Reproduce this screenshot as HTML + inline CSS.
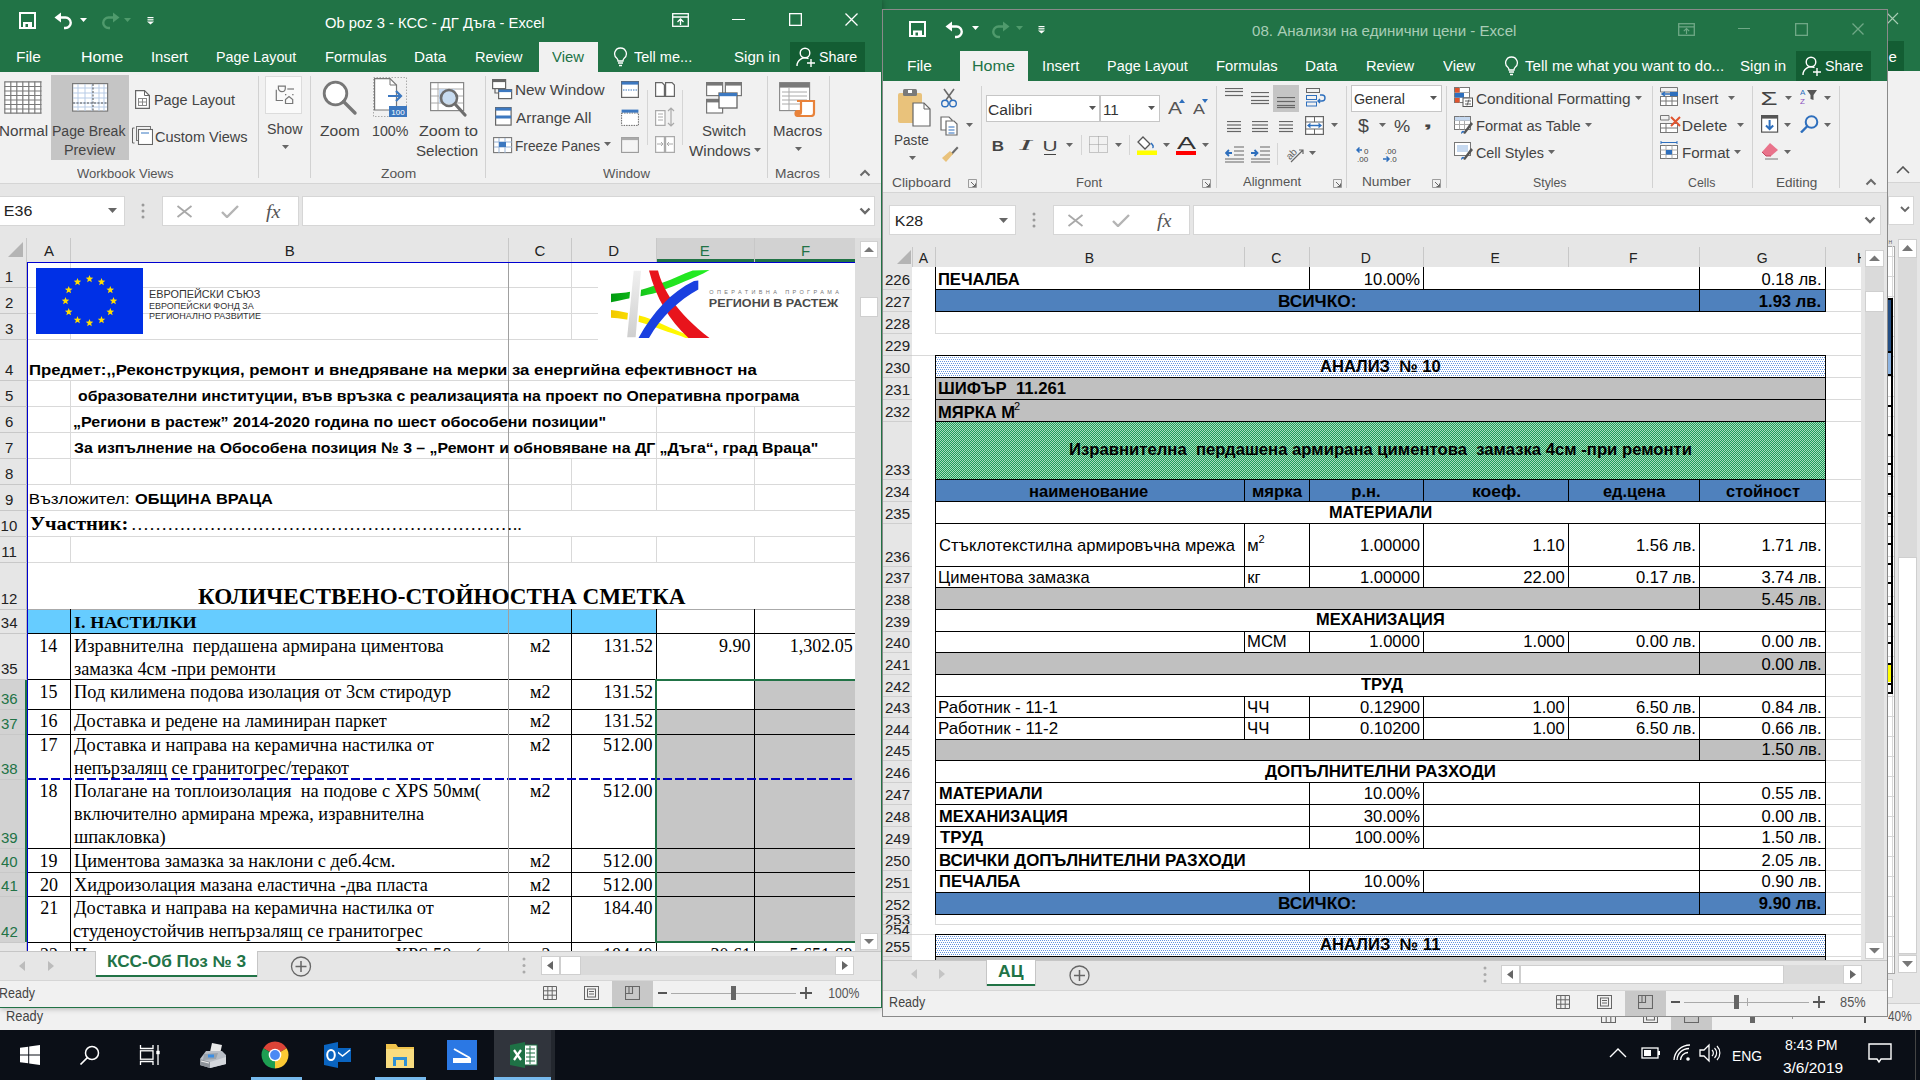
<!DOCTYPE html><html><head><meta charset="utf-8"><title>Excel</title><style>html,body{margin:0;padding:0;width:1920px;height:1080px;overflow:hidden;background:#f1f1f1;}.a{position:absolute;}</style></head><body><div style="position:absolute;left:0;top:0;width:1920px;height:1080px;overflow:hidden;"><div style="position:absolute;left:0px;top:0px;width:1920px;height:41px;background:#217346"></div><div style="position:absolute;left:0px;top:41px;width:1920px;height:30px;background:#217346"></div><div style="position:absolute;left:1829px;top:41px;width:75px;height:30px;background:#135d33"></div><div style="position:absolute;left:1888.40px;top:49.30px;white-space:pre;font-family:'Liberation Sans', sans-serif;font-size:15px;line-height:15px;font-weight:normal;color:#fff;">e</div><svg style="position:absolute;left:1886px;top:12px;" width="13" height="13" viewBox="0 0 13 13"><path d="M1 1L12 12M12 1L1 12" stroke="#a8cdb4" stroke-width="1.1"/></svg><div style="position:absolute;left:0px;top:71px;width:1920px;height:112px;background:#f1f1f1"></div><div style="position:absolute;left:1897.00px;top:165.84px;white-space:pre;font-family:'Liberation Sans', sans-serif;font-size:12px;line-height:12px;font-weight:normal;color:#000;"></div><svg style="position:absolute;left:1896px;top:166px;" width="14" height="8" viewBox="0 0 14 8"><path d="M1 7L7 1L13 7" stroke="#555" stroke-width="1.6" fill="none"/></svg><div style="position:absolute;left:0px;top:183px;width:1920px;height:847px;background:#e6e6e6"></div><div style="position:absolute;left:0px;top:182px;width:1920px;height:1px;background:#d4d4d4"></div><div style="position:absolute;left:1888px;top:196px;width:26px;height:29px;background:#fff;border:1px solid #d6d6d6;box-sizing:border-box"></div><svg style="position:absolute;left:1900px;top:206px;" width="10" height="7" viewBox="0 0 10 7"><path d="M1 1L5 5L9 1" stroke="#666" stroke-width="1.8" fill="none"/></svg><div style="position:absolute;left:1888px;top:246px;width:6px;height:728px;background:#fff"></div><div style="position:absolute;left:1888px;top:246px;width:6px;height:1px;background:#a8a8a8"></div><div style="position:absolute;left:1894px;top:246px;width:1px;height:728px;background:#a8a8a8"></div><div style="position:absolute;left:1892px;top:246px;width:1px;height:728px;background:#d8d8d8"></div><div style="position:absolute;left:1888px;top:256px;width:6px;height:1px;background:#d8d8d8"></div><div style="position:absolute;left:1888px;top:276px;width:6px;height:1px;background:#d8d8d8"></div><div style="position:absolute;left:1888px;top:296px;width:6px;height:1px;background:#d8d8d8"></div><div style="position:absolute;left:1888px;top:316px;width:6px;height:1px;background:#d8d8d8"></div><div style="position:absolute;left:1888px;top:336px;width:6px;height:1px;background:#d8d8d8"></div><div style="position:absolute;left:1888px;top:356px;width:6px;height:1px;background:#d8d8d8"></div><div style="position:absolute;left:1888px;top:376px;width:6px;height:1px;background:#d8d8d8"></div><div style="position:absolute;left:1888px;top:396px;width:6px;height:1px;background:#d8d8d8"></div><div style="position:absolute;left:1888px;top:416px;width:6px;height:1px;background:#d8d8d8"></div><div style="position:absolute;left:1888px;top:436px;width:6px;height:1px;background:#d8d8d8"></div><div style="position:absolute;left:1888px;top:456px;width:6px;height:1px;background:#d8d8d8"></div><div style="position:absolute;left:1888px;top:476px;width:6px;height:1px;background:#d8d8d8"></div><div style="position:absolute;left:1888px;top:496px;width:6px;height:1px;background:#d8d8d8"></div><div style="position:absolute;left:1888px;top:516px;width:6px;height:1px;background:#d8d8d8"></div><div style="position:absolute;left:1888px;top:536px;width:6px;height:1px;background:#d8d8d8"></div><div style="position:absolute;left:1888px;top:556px;width:6px;height:1px;background:#d8d8d8"></div><div style="position:absolute;left:1888px;top:576px;width:6px;height:1px;background:#d8d8d8"></div><div style="position:absolute;left:1888px;top:596px;width:6px;height:1px;background:#d8d8d8"></div><div style="position:absolute;left:1888px;top:616px;width:6px;height:1px;background:#d8d8d8"></div><div style="position:absolute;left:1888px;top:636px;width:6px;height:1px;background:#d8d8d8"></div><div style="position:absolute;left:1888px;top:656px;width:6px;height:1px;background:#d8d8d8"></div><div style="position:absolute;left:1888px;top:676px;width:6px;height:1px;background:#d8d8d8"></div><div style="position:absolute;left:1888px;top:696px;width:6px;height:1px;background:#d8d8d8"></div><div style="position:absolute;left:1888px;top:716px;width:6px;height:1px;background:#d8d8d8"></div><div style="position:absolute;left:1888px;top:736px;width:6px;height:1px;background:#d8d8d8"></div><div style="position:absolute;left:1888px;top:756px;width:6px;height:1px;background:#d8d8d8"></div><div style="position:absolute;left:1888px;top:776px;width:6px;height:1px;background:#d8d8d8"></div><div style="position:absolute;left:1888px;top:796px;width:6px;height:1px;background:#d8d8d8"></div><div style="position:absolute;left:1888px;top:816px;width:6px;height:1px;background:#d8d8d8"></div><div style="position:absolute;left:1888px;top:836px;width:6px;height:1px;background:#d8d8d8"></div><div style="position:absolute;left:1888px;top:856px;width:6px;height:1px;background:#d8d8d8"></div><div style="position:absolute;left:1888px;top:876px;width:6px;height:1px;background:#d8d8d8"></div><div style="position:absolute;left:1888px;top:896px;width:6px;height:1px;background:#d8d8d8"></div><div style="position:absolute;left:1888px;top:916px;width:6px;height:1px;background:#d8d8d8"></div><div style="position:absolute;left:1888px;top:936px;width:6px;height:1px;background:#d8d8d8"></div><div style="position:absolute;left:1888px;top:956px;width:6px;height:1px;background:#d8d8d8"></div><div style="position:absolute;left:1888px;top:973px;width:7px;height:1px;background:#a8a8a8"></div><div style="position:absolute;left:1888px;top:298px;width:3px;height:53px;background:#234e84"></div><div style="position:absolute;left:1888px;top:353px;width:3px;height:21px;background:#8db4e2"></div><div style="position:absolute;left:1888px;top:664px;width:3px;height:18px;background:#ffff00"></div><div style="position:absolute;left:1891px;top:298px;width:2px;height:394px;background:#000"></div><div style="position:absolute;left:1888px;top:298px;width:5px;height:2px;background:#000"></div><div style="position:absolute;left:1888px;top:351px;width:5px;height:2px;background:#000"></div><div style="position:absolute;left:1888px;top:374px;width:5px;height:2px;background:#000"></div><div style="position:absolute;left:1888px;top:405px;width:5px;height:2px;background:#000"></div><div style="position:absolute;left:1888px;top:434px;width:5px;height:2px;background:#000"></div><div style="position:absolute;left:1888px;top:463px;width:5px;height:2px;background:#000"></div><div style="position:absolute;left:1888px;top:473px;width:5px;height:2px;background:#000"></div><div style="position:absolute;left:1888px;top:493px;width:5px;height:2px;background:#000"></div><div style="position:absolute;left:1888px;top:512px;width:5px;height:2px;background:#000"></div><div style="position:absolute;left:1888px;top:523px;width:5px;height:2px;background:#000"></div><div style="position:absolute;left:1888px;top:543px;width:5px;height:2px;background:#000"></div><div style="position:absolute;left:1888px;top:563px;width:5px;height:2px;background:#000"></div><div style="position:absolute;left:1888px;top:582px;width:5px;height:2px;background:#000"></div><div style="position:absolute;left:1888px;top:603px;width:5px;height:2px;background:#000"></div><div style="position:absolute;left:1888px;top:623px;width:5px;height:2px;background:#000"></div><div style="position:absolute;left:1888px;top:642px;width:5px;height:2px;background:#000"></div><div style="position:absolute;left:1888px;top:663px;width:5px;height:2px;background:#000"></div><div style="position:absolute;left:1888px;top:683px;width:5px;height:2px;background:#000"></div><div style="position:absolute;left:1888px;top:692px;width:5px;height:2px;background:#000"></div><div style="position:absolute;left:1888.60px;top:239.77px;white-space:pre;font-family:'Liberation Sans', sans-serif;font-size:5px;line-height:5px;font-weight:normal;color:#555;">H</div><div style="position:absolute;left:1898px;top:257px;width:19px;height:698px;background:#dadada"></div><div style="position:absolute;left:1898px;top:239px;width:19px;height:19px;background:#fff;border:1px solid #cfcfcf;box-sizing:border-box"></div><svg style="position:absolute;left:1902px;top:244px;" width="11" height="7" viewBox="0 0 11 7"><path d="M0 7L5.5 1L11 7Z" fill="#777"/></svg><div style="position:absolute;left:1898px;top:557px;width:19px;height:397px;background:#fff;border:1px solid #cfcfcf;box-sizing:border-box"></div><div style="position:absolute;left:1898px;top:955px;width:19px;height:18px;background:#fff;border:1px solid #cfcfcf;box-sizing:border-box"></div><svg style="position:absolute;left:1902px;top:961px;" width="11" height="7" viewBox="0 0 11 7"><path d="M0 0L5.5 6L11 0Z" fill="#777"/></svg><div style="position:absolute;left:1888px;top:979px;width:5px;height:19px;background:#fff;border:1px solid #d0d0d0;border-left:none;box-sizing:border-box"></div><div style="position:absolute;left:0px;top:1003px;width:1920px;height:27px;background:#f1f1f1"></div><div style="position:absolute;left:0px;top:1003px;width:1920px;height:1px;background:#d0d0d0"></div><div style="position:absolute;left:5.90px;top:1009.15px;white-space:pre;font-family:'Liberation Sans', sans-serif;font-size:14px;line-height:14px;font-weight:normal;color:#444;transform:scaleX(0.9137);transform-origin:1.10px 0;">Ready</div><div style="position:absolute;left:1887.70px;top:1008.75px;white-space:pre;font-family:'Liberation Sans', sans-serif;font-size:14px;line-height:14px;font-weight:normal;color:#555;transform:scaleX(0.8425);transform-origin:0.30px 0;">40%</div><div style="position:absolute;left:1671px;top:1017px;width:41px;height:13px;background:#c8c8c8"></div><svg style="position:absolute;left:1601px;top:1017px;" width="15" height="6" viewBox="0 0 15 6"><path d="M0.5 0V5.5H14.5V0M5.2 0V5.5M9.8 0V5.5" stroke="#666" stroke-width="1.1" fill="none"/></svg><svg style="position:absolute;left:1643px;top:1017px;" width="15" height="6" viewBox="0 0 15 6"><path d="M0.5 0V5.5H14.5V0M3.5 0V3H11.5V0" stroke="#666" stroke-width="1.1" fill="none"/></svg><svg style="position:absolute;left:1684px;top:1017px;" width="15" height="6" viewBox="0 0 15 6"><path d="M0.5 0V5.5H14.5V0" stroke="#666" stroke-width="1.1" fill="none"/></svg><div style="position:absolute;left:1750px;top:1017px;width:5px;height:6px;background:#666"></div><div style="position:absolute;left:1792px;top:1017px;width:1px;height:2px;background:#999"></div><div style="position:absolute;left:1864px;top:1017px;width:2px;height:6px;background:#555"></div><div style="position:absolute;left:0px;top:1030px;width:1920px;height:50px;background:#0b0f17"></div><svg style="position:absolute;left:20px;top:1045px;" width="20" height="20" viewBox="0 0 20 20"><path d="M0 2.8L8.2 1.7V9.5H0Z M9.2 1.5L20 0V9.5H9.2Z M0 10.5H8.2V18.3L0 17.2Z M9.2 10.5H20V20L9.2 18.5Z" fill="#fff"/></svg><svg style="position:absolute;left:79px;top:1044px;" width="22" height="22" viewBox="0 0 22 22"><circle cx="13" cy="9" r="6.5" stroke="#fff" stroke-width="1.5" fill="none"/><path d="M8.5 13.5L1.5 20.5" stroke="#fff" stroke-width="1.7"/></svg><svg style="position:absolute;left:139px;top:1044px;" width="22" height="22" viewBox="0 0 22 22"><path d="M1.5 1V4.5H14V1M1.5 21V17.5H14V21M19 1V21" stroke="#fff" stroke-width="1.3" fill="none"/><rect x="1.5" y="6.8" width="12.5" height="8.4" stroke="#fff" stroke-width="1.3" fill="none"/><rect x="17.3" y="6.8" width="3.4" height="3.4" fill="#fff"/></svg><svg style="position:absolute;left:198px;top:1042px;" width="30" height="27" viewBox="0 0 30 27"><path d="M14 1L24 3L22 12L12 10Z" fill="#e8e8e8"/><path d="M2 17L8 9H24L28 13V22L12 26L2 23Z" fill="#b9bec6"/><path d="M2 17L12 20V26L2 23Z" fill="#8e939a"/><path d="M12 20L28 15V22L12 26Z" fill="#d4d7dc"/><path d="M6 12L20 11L18 17L5 18Z" fill="#9aa3ad"/><rect x="10" y="12.5" width="6" height="3" fill="#3a8ee6"/><path d="M3 19L11 21" stroke="#eee" stroke-width="1.2"/></svg><svg style="position:absolute;left:261px;top:1041px;" width="28" height="28" viewBox="0 0 28 28"><path d="M14 14L2.31 7.25A13.5 13.5 0 0 1 25.69 7.25Z" fill="#db4437"/><path d="M14 14L25.69 7.25A13.5 13.5 0 0 1 14 27.5Z" fill="#fcc934"/><path d="M14 14L14 27.5A13.5 13.5 0 0 1 2.31 7.25Z" fill="#1e9e52"/><circle cx="14" cy="14" r="6.3" fill="#fff"/><circle cx="14" cy="14" r="4.9" fill="#4a8af4"/></svg><div style="position:absolute;left:251px;top:1077px;width:51px;height:3px;background:#76b9ed"></div><svg style="position:absolute;left:324px;top:1041px;" width="28" height="28" viewBox="0 0 28 28"><rect x="10" y="7" width="17" height="14" fill="#0a64c0"/><path d="M11 9L18.5 15L26 9" stroke="#fff" stroke-width="1.6" fill="none"/><path d="M0 4L14 1V27L0 24Z" fill="#0a64c0"/><ellipse cx="7" cy="14" rx="3.8" ry="5" stroke="#fff" stroke-width="2" fill="none"/></svg><svg style="position:absolute;left:386px;top:1042px;" width="28" height="26" viewBox="0 0 28 26"><path d="M0 2H10L12 5H28V26H0Z" fill="#f0c34c"/><rect x="0" y="7" width="28" height="19" fill="#f8dc80"/><rect x="7" y="15" width="14" height="3" fill="#2d8fd5"/><rect x="7" y="15" width="3" height="9" fill="#2d8fd5"/><rect x="18" y="15" width="3" height="9" fill="#2d8fd5"/></svg><div style="position:absolute;left:375px;top:1077px;width:51px;height:3px;background:#76b9ed"></div><svg style="position:absolute;left:447px;top:1040px;" width="30" height="30" viewBox="0 0 30 30"><rect x="0" y="0" width="30" height="30" fill="#2b78e4"/><path d="M7 9L23 18" stroke="#fff" stroke-width="2"/><rect x="6" y="18" width="18" height="5" fill="#fff"/></svg><div style="position:absolute;left:494px;top:1030px;width:57px;height:50px;background:#30343c"></div><div style="position:absolute;left:551px;top:1030px;width:4px;height:50px;background:#23272e"></div><svg style="position:absolute;left:510px;top:1042px;" width="28" height="26" viewBox="0 0 28 26"><rect x="12" y="3" width="15" height="20" fill="#fff" stroke="#1e7145" stroke-width="1"/><path d="M16 7H25M16 11H25M16 15H25M16 19H25M20 4V22" stroke="#1e7145" stroke-width="1"/><path d="M0 3L15 0V26L0 23Z" fill="#1e7145"/><path d="M4 8L11 18M11 8L4 18" stroke="#fff" stroke-width="2.2"/></svg><div style="position:absolute;left:494px;top:1077px;width:57px;height:3px;background:#76b9ed"></div><svg style="position:absolute;left:1608px;top:1047px;" width="20" height="12" viewBox="0 0 20 12"><path d="M2 10L10 2L18 10" stroke="#fff" stroke-width="1.4" fill="none"/></svg><svg style="position:absolute;left:1641px;top:1046px;" width="20" height="14" viewBox="0 0 20 14"><rect x="1" y="2" width="16" height="10" stroke="#fff" stroke-width="1.3" fill="none"/><rect x="3" y="4" width="7" height="6" fill="#fff"/><rect x="17" y="5" width="2" height="4" fill="#fff"/></svg><svg style="position:absolute;left:1672px;top:1043px;" width="22" height="20" viewBox="0 0 22 20"><path d="M2 17A16 16 0 0 1 18 2M5 17A12 12 0 0 1 17 5.5M8.5 17A8 8 0 0 1 16 9.5" stroke="#fff" stroke-width="1.3" fill="none"/><circle cx="16" cy="16" r="1.8" fill="#fff"/></svg><svg style="position:absolute;left:1699px;top:1043px;" width="22" height="20" viewBox="0 0 22 20"><path d="M1 7H5L10 2V18L5 13H1Z" stroke="#fff" stroke-width="1.3" fill="none"/><path d="M13 7A4 4 0 0 1 13 13M15.5 5A7 7 0 0 1 15.5 15M18 3A10 10 0 0 1 18 17" stroke="#fff" stroke-width="1.2" fill="none"/></svg><div style="position:absolute;left:1731.90px;top:1049.15px;white-space:pre;font-family:'Liberation Sans', sans-serif;font-size:14px;line-height:14px;font-weight:normal;color:#fff;transform:scaleX(0.9929);transform-origin:1.10px 0;">ENG</div><div style="position:absolute;left:1785.40px;top:1038.15px;white-space:pre;font-family:'Liberation Sans', sans-serif;font-size:14px;line-height:14px;font-weight:normal;color:#fff;transform:scaleX(1.0099);transform-origin:0.60px 0;">8:43 PM</div><div style="position:absolute;left:1782.50px;top:1061.15px;white-space:pre;font-family:'Liberation Sans', sans-serif;font-size:14px;line-height:14px;font-weight:normal;color:#fff;transform:scaleX(1.1049);transform-origin:0.50px 0;">3/6/2019</div><svg style="position:absolute;left:1868px;top:1043px;" width="24" height="22" viewBox="0 0 24 22"><path d="M1 1H23V16H13L11 19L9 16H1Z" stroke="#fff" stroke-width="1.4" fill="none"/></svg><div style="position:absolute;left:1915px;top:1030px;width:1px;height:50px;background:#444"></div><div style="position:absolute;left:0;top:0;width:882px;height:1008px;overflow:hidden;box-shadow:0 0 6px rgba(0,0,0,0.35);"><div style="position:absolute;left:0px;top:0px;width:881px;height:1008px;background:#e6e6e6"></div><div style="position:absolute;left:0px;top:0px;width:881px;height:72px;background:#217346"></div><svg style="position:absolute;left:19px;top:12px;" width="17" height="17" viewBox="0 0 17 17"><rect x="1" y="1" width="15" height="15" stroke="#fff" stroke-width="2" fill="none"/><rect x="4" y="10" width="9" height="6" fill="#fff"/><rect x="6.5" y="12" width="2.5" height="3" fill="#217346"/></svg><svg style="position:absolute;left:54px;top:12px;" width="22" height="18" viewBox="0 0 22 18"><path d="M6 5.5H11.5A5.25 5.25 0 0 1 11.5 16H10" stroke="#fff" stroke-width="2.4" fill="none"/><path d="M0.5 5.5L7 0.5V10.5Z" fill="#fff"/></svg><svg style="position:absolute;left:80px;top:18px;" width="8" height="5" viewBox="0 0 8 5"><path d="M0 0H7L3.5 4Z" fill="#fff"/></svg><svg style="position:absolute;left:98px;top:12px;" width="22" height="18" viewBox="0 0 22 18"><path d="M16 5.5H10.5A5.25 5.25 0 0 0 10.5 16H12" stroke="#4f9a6c" stroke-width="2.4" fill="none"/><path d="M21.5 5.5L15 0.5V10.5Z" fill="#4f9a6c"/></svg><svg style="position:absolute;left:124px;top:18px;" width="8" height="5" viewBox="0 0 8 5"><path d="M0 0H7L3.5 4Z" fill="#4f9a6c"/></svg><svg style="position:absolute;left:147px;top:17px;" width="8" height="8" viewBox="0 0 8 8"><rect x="0.5" y="0" width="6" height="1.2" fill="#fff"/><rect x="0.5" y="2.2" width="6" height="1.2" fill="#fff"/><path d="M0 4.5H7L3.5 7.5Z" fill="#fff"/></svg><div style="position:absolute;left:325.30px;top:15.30px;white-space:pre;font-family:'Liberation Sans', sans-serif;font-size:15px;line-height:15px;font-weight:normal;color:#fff;transform:scaleX(0.9838);transform-origin:0.70px 0;">Ob poz 3 - КСС - ДГ Дъга - Excel</div><svg style="position:absolute;left:672px;top:13px;" width="17" height="14" viewBox="0 0 17 14"><rect x="0.7" y="0.7" width="15.6" height="12.6" stroke="#fff" stroke-width="1.3" fill="none"/><path d="M0.7 4H16.3M8.5 12V6M5.5 9L8.5 6L11.5 9" stroke="#fff" stroke-width="1.3" fill="none"/></svg><div style="position:absolute;left:732px;top:19px;width:13px;height:1.3px;background:#fff"></div><svg style="position:absolute;left:789px;top:13px;" width="13" height="13" viewBox="0 0 13 13"><rect x="0.65" y="0.65" width="11.7" height="11.7" stroke="#fff" stroke-width="1.3" fill="none"/></svg><svg style="position:absolute;left:845px;top:13px;" width="13" height="13" viewBox="0 0 13 13"><path d="M0.5 0.5L12.5 12.5M12.5 0.5L0.5 12.5" stroke="#fff" stroke-width="1.3"/></svg><div style="position:absolute;left:15.80px;top:49.00px;white-space:pre;font-family:'Liberation Sans', sans-serif;font-size:15px;line-height:15px;font-weight:normal;color:#fff;transform:scaleX(1.0314);transform-origin:1.20px 0;">File</div><div style="position:absolute;left:80.80px;top:49.00px;white-space:pre;font-family:'Liberation Sans', sans-serif;font-size:15px;line-height:15px;font-weight:normal;color:#fff;transform:scaleX(1.0602);transform-origin:1.20px 0;">Home</div><div style="position:absolute;left:150.70px;top:49.00px;white-space:pre;font-family:'Liberation Sans', sans-serif;font-size:15px;line-height:15px;font-weight:normal;color:#fff;transform:scaleX(0.9834);transform-origin:1.30px 0;">Insert</div><div style="position:absolute;left:215.80px;top:49.00px;white-space:pre;font-family:'Liberation Sans', sans-serif;font-size:15px;line-height:15px;font-weight:normal;color:#fff;transform:scaleX(0.9518);transform-origin:1.20px 0;">Page Layout</div><div style="position:absolute;left:324.80px;top:49.00px;white-space:pre;font-family:'Liberation Sans', sans-serif;font-size:15px;line-height:15px;font-weight:normal;color:#fff;transform:scaleX(0.9868);transform-origin:1.20px 0;">Formulas</div><div style="position:absolute;left:413.80px;top:49.00px;white-space:pre;font-family:'Liberation Sans', sans-serif;font-size:15px;line-height:15px;font-weight:normal;color:#fff;transform:scaleX(1.0164);transform-origin:1.20px 0;">Data</div><div style="position:absolute;left:474.80px;top:49.00px;white-space:pre;font-family:'Liberation Sans', sans-serif;font-size:15px;line-height:15px;font-weight:normal;color:#fff;transform:scaleX(0.9667);transform-origin:1.20px 0;">Review</div><div style="position:absolute;left:539px;top:42px;width:59px;height:30px;background:#f1f1f1"></div><div style="position:absolute;left:552.00px;top:49.00px;white-space:pre;font-family:'Liberation Sans', sans-serif;font-size:15px;line-height:15px;font-weight:normal;color:#217346;transform:scaleX(0.9907);transform-origin:0.00px 0;">View</div><svg style="position:absolute;left:613px;top:47px;" width="15" height="20" viewBox="0 0 15 20"><path d="M7.5 1A5.8 5.8 0 0 0 3.8 11.3C4.6 12 5 13 5 14H10C10 13 10.4 12 11.2 11.3A5.8 5.8 0 0 0 7.5 1Z" stroke="#fff" stroke-width="1.3" fill="none"/><path d="M5 16H10M6 18.5H9" stroke="#fff" stroke-width="1.3"/></svg><div style="position:absolute;left:634.20px;top:49.00px;white-space:pre;font-family:'Liberation Sans', sans-serif;font-size:15px;line-height:15px;font-weight:normal;color:#fff;transform:scaleX(0.9691);transform-origin:0.30px 0;">Tell me...</div><div style="position:absolute;left:734.40px;top:49.00px;white-space:pre;font-family:'Liberation Sans', sans-serif;font-size:15px;line-height:15px;font-weight:normal;color:#fff;transform:scaleX(1.0045);transform-origin:0.60px 0;">Sign in</div><div style="position:absolute;left:790px;top:42px;width:75px;height:30px;background:#135d33"></div><svg style="position:absolute;left:796px;top:47px;" width="20" height="21" viewBox="0 0 20 21"><circle cx="9" cy="6" r="4.8" stroke="#fff" stroke-width="1.4" fill="none"/><path d="M1 19A8 8 0 0 1 12.5 11.7" stroke="#fff" stroke-width="1.4" fill="none"/><path d="M15 12V20M11 16H19" stroke="#fff" stroke-width="1.4"/></svg><div style="position:absolute;left:819.40px;top:49.00px;white-space:pre;font-family:'Liberation Sans', sans-serif;font-size:15px;line-height:15px;font-weight:normal;color:#fff;transform:scaleX(0.9536);transform-origin:0.60px 0;">Share</div><div style="position:absolute;left:0px;top:72px;width:881px;height:111px;background:#f1f1f1"></div><div style="position:absolute;left:0px;top:183px;width:881px;height:1px;background:#d5d5d5"></div><div style="position:absolute;left:258px;top:76px;width:1px;height:102px;background:#d2d2d2"></div><div style="position:absolute;left:310px;top:76px;width:1px;height:102px;background:#d2d2d2"></div><div style="position:absolute;left:485px;top:76px;width:1px;height:102px;background:#d2d2d2"></div><div style="position:absolute;left:767px;top:76px;width:1px;height:102px;background:#d2d2d2"></div><div style="position:absolute;left:829px;top:76px;width:1px;height:102px;background:#d2d2d2"></div><svg style="position:absolute;left:4px;top:81px;" width="38" height="33" viewBox="0 0 38 33"><rect x="0.5" y="0.5" width="37" height="32" fill="#fff"/><path d="M0.5 0.8H37.5" stroke="#7a7a7a" stroke-width="1.2"/><path d="M0.5 5.5H37.5" stroke="#7a7a7a" stroke-width="1.2"/><path d="M0.5 10H37.5" stroke="#7a7a7a" stroke-width="1.2"/><path d="M0.5 14.5H37.5" stroke="#7a7a7a" stroke-width="1.2"/><path d="M0.5 19H37.5" stroke="#7a7a7a" stroke-width="1.2"/><path d="M0.5 23.5H37.5" stroke="#7a7a7a" stroke-width="1.2"/><path d="M0.5 28H37.5" stroke="#7a7a7a" stroke-width="1.2"/><path d="M0.5 32.2H37.5" stroke="#7a7a7a" stroke-width="1.2"/><path d="M0.8 0.5V32.5" stroke="#7a7a7a" stroke-width="1.2"/><path d="M6.8 0.5V32.5" stroke="#7a7a7a" stroke-width="1.2"/><path d="M12.8 0.5V32.5" stroke="#7a7a7a" stroke-width="1.2"/><path d="M18.8 0.5V32.5" stroke="#7a7a7a" stroke-width="1.2"/><path d="M24.8 0.5V32.5" stroke="#7a7a7a" stroke-width="1.2"/><path d="M30.8 0.5V32.5" stroke="#7a7a7a" stroke-width="1.2"/><path d="M36.8 0.5V32.5" stroke="#7a7a7a" stroke-width="1.2"/></svg><div style="position:absolute;left:-1.10px;top:123.85px;white-space:pre;font-family:'Liberation Sans', sans-serif;font-size:14px;line-height:14px;font-weight:normal;color:#444;transform:scaleX(1.0905);transform-origin:1.10px 0;">Normal</div><div style="position:absolute;left:51px;top:75px;width:78px;height:85px;background:#c5c5c5"></div><svg style="position:absolute;left:72px;top:83px;" width="37" height="29" viewBox="0 0 37 29"><rect x="0.6" y="0.6" width="35" height="27.5" fill="#fff" stroke="#7a7a7a" stroke-width="1.2"/><path d="M1 5H35" stroke="#b7cbe6" stroke-width="1"/><path d="M1 10H35" stroke="#b7cbe6" stroke-width="1"/><path d="M1 15H35" stroke="#b7cbe6" stroke-width="1"/><path d="M1 20H35" stroke="#b7cbe6" stroke-width="1"/><path d="M1 24H35" stroke="#b7cbe6" stroke-width="1"/><path d="M6 1V28" stroke="#b7cbe6" stroke-width="1"/><path d="M13 1V28" stroke="#b7cbe6" stroke-width="1"/><path d="M20 1V28" stroke="#b7cbe6" stroke-width="1"/><path d="M27 1V28" stroke="#b7cbe6" stroke-width="1"/><path d="M32 1V28" stroke="#b7cbe6" stroke-width="1"/><path d="M21 1V28M1 20H35" stroke="#555" stroke-width="1" stroke-dasharray="2 1.5"/></svg><div style="position:absolute;left:52.40px;top:123.85px;white-space:pre;font-family:'Liberation Sans', sans-serif;font-size:14px;line-height:14px;font-weight:normal;color:#444;transform:scaleX(1.0042);transform-origin:1.10px 0;">Page Break</div><div style="position:absolute;left:63.50px;top:143.45px;white-space:pre;font-family:'Liberation Sans', sans-serif;font-size:14px;line-height:14px;font-weight:normal;color:#444;transform:scaleX(1.0287);transform-origin:1.10px 0;">Preview</div><svg style="position:absolute;left:135px;top:90px;" width="15" height="19" viewBox="0 0 15 19"><path d="M0.6 0.6H9.5L14.4 5.5V18.4H0.6Z" fill="#fff" stroke="#666" stroke-width="1.2"/><path d="M9.5 0.6V5.5H14.4" fill="none" stroke="#666" stroke-width="1"/><rect x="3.5" y="8.5" width="8" height="7" fill="none" stroke="#888" stroke-width="1"/><path d="M7.5 8.5V15.5M3.5 12H11.5" stroke="#888" stroke-width="1"/></svg><div style="position:absolute;left:154.20px;top:93.15px;white-space:pre;font-family:'Liberation Sans', sans-serif;font-size:14px;line-height:14px;font-weight:normal;color:#444;transform:scaleX(1.0297);transform-origin:1.10px 0;">Page Layout</div><svg style="position:absolute;left:132px;top:126px;" width="21" height="19" viewBox="0 0 21 19"><path d="M0.5 2V17M0.5 2H2.5M0.5 17H2.5" stroke="#666" stroke-width="1"/><rect x="4.5" y="0.5" width="14" height="14" fill="none" stroke="#777" stroke-width="1"/><rect x="6.5" y="3.5" width="14" height="15" fill="#fff" stroke="#666" stroke-width="1.1"/><rect x="9" y="6" width="8" height="2" fill="#9bbbe0"/></svg><div style="position:absolute;left:154.60px;top:129.55px;white-space:pre;font-family:'Liberation Sans', sans-serif;font-size:14px;line-height:14px;font-weight:normal;color:#444;transform:scaleX(1.0386);transform-origin:0.70px 0;">Custom Views</div><div style="position:absolute;left:76.50px;top:166.70px;white-space:pre;font-family:'Liberation Sans', sans-serif;font-size:13px;line-height:13px;font-weight:normal;color:#555;transform:scaleX(1.0010);transform-origin:0.00px 0;">Workbook Views</div><div style="position:absolute;left:265px;top:76px;width:37px;height:38px;background:#fafafa;border:1px solid #dcdcdc;box-sizing:border-box"></div><svg style="position:absolute;left:274px;top:84px;" width="22" height="22" viewBox="0 0 22 22"><path d="M2.3 5.8V16.5H9" stroke="#777" stroke-width="1.2" fill="none"/><path d="M4.4 2.2H11.3V4.2A3.45 3.45 0 0 1 4.4 4.2Z" stroke="#777" stroke-width="1.2" fill="none"/><path d="M13.3 5H20" stroke="#777" stroke-width="1.2"/><rect x="11" y="10" width="1.3" height="1.3" fill="#777"/><rect x="18.2" y="10" width="1.3" height="1.3" fill="#777"/><path d="M11.5 19.5V15.5L15 12.5L18.7 15.5V19.5Z" stroke="#777" stroke-width="1.2" fill="none"/></svg><div style="position:absolute;left:266.90px;top:122.15px;white-space:pre;font-family:'Liberation Sans', sans-serif;font-size:14px;line-height:14px;font-weight:normal;color:#444;transform:scaleX(1.0145);transform-origin:0.60px 0;">Show</div><svg style="position:absolute;left:282px;top:145px;" width="7" height="5" viewBox="0 0 7 5"><path d="M0 0H7L3.5 4Z" fill="#666"/></svg><svg style="position:absolute;left:321px;top:80px;" width="38" height="36" viewBox="0 0 38 36"><circle cx="14.5" cy="13.5" r="11.3" stroke="#777" stroke-width="2.8" fill="#fff"/><path d="M22.5 21.5L34 33" stroke="#777" stroke-width="3.4" stroke-linecap="round"/></svg><div style="position:absolute;left:320.10px;top:124.15px;white-space:pre;font-family:'Liberation Sans', sans-serif;font-size:14px;line-height:14px;font-weight:normal;color:#444;transform:scaleX(1.1159);transform-origin:0.40px 0;">Zoom</div><svg style="position:absolute;left:373px;top:77px;" width="35" height="41" viewBox="0 0 35 41"><rect x="0.5" y="0.5" width="33" height="39" fill="none" stroke="#999" stroke-width="0.8" stroke-dasharray="1.5 1.5"/><path d="M1.6 1.6H17L23.5 8V33H1.6Z" fill="#fff" stroke="#777" stroke-width="1.2"/><path d="M17 1.6V8H23.5" fill="none" stroke="#777" stroke-width="1"/><path d="M15 19H28M23 14L28 19L23 24" stroke="#3c78c0" stroke-width="2.2" fill="none"/><rect x="16" y="29" width="18" height="11" fill="#3c78c0"/><text x="25" y="38" font-family="Liberation Sans" font-size="8" fill="#fff" text-anchor="middle">100</text></svg><div style="position:absolute;left:371.50px;top:124.15px;white-space:pre;font-family:'Liberation Sans', sans-serif;font-size:14px;line-height:14px;font-weight:normal;color:#444;transform:scaleX(1.0174);transform-origin:1.00px 0;">100%</div><svg style="position:absolute;left:430px;top:82px;" width="38" height="35" viewBox="0 0 38 35"><rect x="0.6" y="0.6" width="33" height="28" fill="#fff" stroke="#888" stroke-width="1.2"/><path d="M1 7H33M1 14H33M1 21H33M8 1V28" stroke="#aaa" stroke-width="1"/><rect x="9" y="7" width="16" height="14" fill="#c6d9f0"/><circle cx="19" cy="16" r="8" stroke="#6d6d6d" stroke-width="2.6" fill="rgba(200,220,240,0.6)"/><path d="M25 22L35 33" stroke="#6d6d6d" stroke-width="3.2" stroke-linecap="round"/></svg><div style="position:absolute;left:418.60px;top:124.15px;white-space:pre;font-family:'Liberation Sans', sans-serif;font-size:14px;line-height:14px;font-weight:normal;color:#444;transform:scaleX(1.1508);transform-origin:0.40px 0;">Zoom to</div><div style="position:absolute;left:416.40px;top:143.75px;white-space:pre;font-family:'Liberation Sans', sans-serif;font-size:14px;line-height:14px;font-weight:normal;color:#444;transform:scaleX(1.0784);transform-origin:0.60px 0;">Selection</div><div style="position:absolute;left:380.60px;top:166.50px;white-space:pre;font-family:'Liberation Sans', sans-serif;font-size:13px;line-height:13px;font-weight:normal;color:#555;transform:scaleX(1.0625);transform-origin:0.40px 0;">Zoom</div><svg style="position:absolute;left:492px;top:79px;" width="21" height="21" viewBox="0 0 21 21"><rect x="0.6" y="0.6" width="13" height="9" fill="#fff" stroke="#666" stroke-width="1.2"/><rect x="0.6" y="0.6" width="13" height="2.5" fill="#666"/><rect x="6.6" y="10.6" width="13" height="9" fill="#fff" stroke="#666" stroke-width="1.2"/><rect x="6.6" y="10.6" width="13" height="2.5" fill="#3c78c0"/><path d="M3 9V14H6" stroke="#666" stroke-width="1.2" fill="none"/></svg><div style="position:absolute;left:514.90px;top:83.15px;white-space:pre;font-family:'Liberation Sans', sans-serif;font-size:14px;line-height:14px;font-weight:normal;color:#444;transform:scaleX(1.0967);transform-origin:1.10px 0;">New Window</div><svg style="position:absolute;left:495px;top:107px;" width="17" height="19" viewBox="0 0 17 19"><rect x="0.6" y="0.6" width="15.5" height="17.5" fill="#fff" stroke="#666" stroke-width="1.2"/><rect x="0.6" y="0.6" width="15.5" height="3" fill="#3c78c0"/><rect x="0.6" y="8.5" width="15.5" height="3" fill="#3c78c0"/></svg><div style="position:absolute;left:516.00px;top:111.15px;white-space:pre;font-family:'Liberation Sans', sans-serif;font-size:14px;line-height:14px;font-weight:normal;color:#444;transform:scaleX(1.1021);transform-origin:0.00px 0;">Arrange All</div><svg style="position:absolute;left:493px;top:137px;" width="20" height="17" viewBox="0 0 20 17"><rect x="0.6" y="0.6" width="18" height="15" fill="#fff" stroke="#777" stroke-width="1.1"/><path d="M1 5H19M1 10H19M6 1V16M12 1V16" stroke="#99b3d5" stroke-width="1"/><rect x="6" y="5" width="7" height="5" fill="#3c78c0"/></svg><div style="position:absolute;left:514.90px;top:138.65px;white-space:pre;font-family:'Liberation Sans', sans-serif;font-size:14px;line-height:14px;font-weight:normal;color:#444;transform:scaleX(0.9755);transform-origin:1.10px 0;">Freeze Panes</div><svg style="position:absolute;left:604px;top:142px;" width="7" height="5" viewBox="0 0 7 5"><path d="M0 0H7L3.5 4Z" fill="#666"/></svg><svg style="position:absolute;left:621px;top:81px;" width="18" height="17" viewBox="0 0 18 17"><rect x="0.6" y="0.6" width="16.8" height="15.8" fill="#fff" stroke="#666" stroke-width="1.2"/><rect x="0.6" y="0.6" width="16.8" height="3" fill="#3c78c0"/><path d="M2 9H16" stroke="#3c78c0" stroke-width="1" stroke-dasharray="1.5 1"/></svg><svg style="position:absolute;left:621px;top:109px;" width="18" height="17" viewBox="0 0 18 17"><rect x="0.6" y="4" width="16.8" height="12.4" fill="#fff" stroke="#666" stroke-width="1" stroke-dasharray="1.5 1"/><rect x="0.6" y="0.6" width="16.8" height="3" fill="#3c78c0"/></svg><svg style="position:absolute;left:621px;top:137px;" width="18" height="16" viewBox="0 0 18 16"><rect x="0.6" y="0.6" width="16.8" height="14.8" fill="#f5f5f5" stroke="#999" stroke-width="1.1"/><rect x="0.6" y="0.6" width="16.8" height="2.5" fill="#aaa"/></svg><div style="position:absolute;left:647px;top:90px;width:1px;height:55px;background:#d5d5d5"></div><svg style="position:absolute;left:655px;top:82px;" width="20" height="15" viewBox="0 0 20 15"><path d="M0.6 0.6H7L9.4 3V14.4H0.6Z M10.6 0.6H17L19.4 3V14.4H10.6Z" fill="#fff" stroke="#666" stroke-width="1.2"/></svg><svg style="position:absolute;left:655px;top:107px;" width="20" height="20" viewBox="0 0 20 20"><path d="M0.6 3.6H10V18.4H0.6Z" fill="#fff" stroke="#aaa" stroke-width="1.2"/><path d="M3 7H8M3 10H8M3 13H8" stroke="#aaa" stroke-width="1"/><path d="M16 1V19M13 4L16 1L19 4M13 16L16 19L19 16" stroke="#aaa" stroke-width="1.2" fill="none"/></svg><svg style="position:absolute;left:655px;top:136px;" width="20" height="17" viewBox="0 0 20 17"><path d="M0.6 0.6H9.4V16.4H0.6ZM10.6 0.6H19.4V16.4H10.6Z" fill="#fff" stroke="#aaa" stroke-width="1.2"/><path d="M2 8H8M6 6L8 8L6 10M18 8H12M14 6L12 8L14 10" stroke="#aaa" stroke-width="1" fill="none"/></svg><div style="position:absolute;left:682px;top:90px;width:1px;height:55px;background:#d5d5d5"></div><svg style="position:absolute;left:706px;top:82px;" width="37" height="32" viewBox="0 0 37 32"><rect x="0.6" y="0.6" width="16" height="13" fill="#fff" stroke="#777" stroke-width="1.2"/><rect x="0.6" y="0.6" width="16" height="3" fill="#777"/><rect x="19.4" y="0.6" width="16" height="13" fill="#fff" stroke="#777" stroke-width="1.2"/><rect x="19.4" y="0.6" width="16" height="3" fill="#777"/><rect x="0.6" y="17.4" width="16" height="13.6" fill="#fff" stroke="#777" stroke-width="1.2"/><rect x="0.6" y="17.4" width="16" height="3" fill="#777"/><rect x="13" y="11" width="18" height="15" fill="#fff" stroke="#666" stroke-width="1.3"/><rect x="13" y="11" width="18" height="3.2" fill="#3c78c0"/></svg><div style="position:absolute;left:702.40px;top:124.15px;white-space:pre;font-family:'Liberation Sans', sans-serif;font-size:14px;line-height:14px;font-weight:normal;color:#444;transform:scaleX(1.0705);transform-origin:0.60px 0;">Switch</div><div style="position:absolute;left:689.00px;top:143.65px;white-space:pre;font-family:'Liberation Sans', sans-serif;font-size:14px;line-height:14px;font-weight:normal;color:#444;transform:scaleX(1.0835);transform-origin:0.00px 0;">Windows</div><svg style="position:absolute;left:754px;top:148px;" width="7" height="5" viewBox="0 0 7 5"><path d="M0 0H7L3.5 4Z" fill="#666"/></svg><div style="position:absolute;left:603.00px;top:166.50px;white-space:pre;font-family:'Liberation Sans', sans-serif;font-size:13px;line-height:13px;font-weight:normal;color:#555;transform:scaleX(1.0151);transform-origin:0.00px 0;">Window</div><svg style="position:absolute;left:779px;top:82px;" width="38" height="35" viewBox="0 0 38 35"><rect x="0.6" y="0.6" width="30" height="28" fill="#fff" stroke="#888" stroke-width="1.1"/><rect x="0.6" y="0.6" width="30" height="5" fill="#7a7a7a"/><path d="M3 10H28M3 14H28M3 18H28M3 22H28M10 6V28" stroke="#aaa" stroke-width="1"/><path d="M18 19H35V31A3 3 0 0 1 32 34H19A2.5 2.5 0 0 1 19 29H22V19Z" fill="#fff" stroke="#e8823a" stroke-width="2.2"/><rect x="16" y="28" width="7" height="5" rx="2.5" fill="#e8823a"/></svg><div style="position:absolute;left:773.40px;top:124.15px;white-space:pre;font-family:'Liberation Sans', sans-serif;font-size:14px;line-height:14px;font-weight:normal;color:#444;transform:scaleX(1.0722);transform-origin:1.10px 0;">Macros</div><svg style="position:absolute;left:795px;top:147px;" width="7" height="5" viewBox="0 0 7 5"><path d="M0 0H7L3.5 4Z" fill="#666"/></svg><div style="position:absolute;left:775.00px;top:166.50px;white-space:pre;font-family:'Liberation Sans', sans-serif;font-size:13px;line-height:13px;font-weight:normal;color:#555;transform:scaleX(1.0558);transform-origin:1.00px 0;">Macros</div><svg style="position:absolute;left:859px;top:169px;" width="12" height="8" viewBox="0 0 12 8"><path d="M1.5 6.5L6 2L10.5 6.5" stroke="#6a6a6a" stroke-width="2" fill="none"/></svg><div style="position:absolute;left:0px;top:196px;width:125px;height:30px;background:#fff;border:1px solid #d6d6d6;border-left:none;box-sizing:border-box"></div><div style="position:absolute;left:4.40px;top:204.15px;white-space:pre;font-family:'Liberation Sans', sans-serif;font-size:14px;line-height:14px;font-weight:normal;color:#222;transform:scaleX(1.1422);transform-origin:1.10px 0;">E36</div><svg style="position:absolute;left:108px;top:208px;" width="9" height="6" viewBox="0 0 9 6"><path d="M0 0H9L4.5 5Z" fill="#666"/></svg><svg style="position:absolute;left:141px;top:203px;" width="4" height="16" viewBox="0 0 4 16"><circle cx="2" cy="2" r="1.5" fill="#999"/><circle cx="2" cy="8" r="1.5" fill="#999"/><circle cx="2" cy="14" r="1.5" fill="#999"/></svg><div style="position:absolute;left:162px;top:196px;width:137px;height:30px;background:#fff;border:1px solid #d6d6d6;box-sizing:border-box"></div><svg style="position:absolute;left:176px;top:205px;" width="17" height="13" viewBox="0 0 17 13"><path d="M1.5 1L15.5 12M15.5 1L1.5 12" stroke="#a9a9a9" stroke-width="1.8"/></svg><svg style="position:absolute;left:221px;top:205px;" width="18" height="13" viewBox="0 0 18 13"><path d="M1 7L6 12L17 1" stroke="#b4b4b4" stroke-width="2.4" fill="none"/></svg><div style="position:absolute;left:265.50px;top:202.09px;white-space:pre;font-family:'Liberation Serif', serif;font-size:19px;line-height:19px;font-weight:normal;color:#555;transform:scaleX(1.0596);transform-origin:0.50px 0;font-style:italic;">fx</div><div style="position:absolute;left:302px;top:196px;width:573px;height:30px;background:#fff;border:1px solid #d6d6d6;box-sizing:border-box"></div><svg style="position:absolute;left:859px;top:207px;" width="12" height="8" viewBox="0 0 12 8"><path d="M1.5 1.5L6 6L10.5 1.5" stroke="#6a6a6a" stroke-width="2.4" fill="none"/></svg><div style="position:absolute;left:0px;top:238px;width:855px;height:24px;background:#e6e6e6"></div><svg style="position:absolute;left:7px;top:242px;" width="17" height="16" viewBox="0 0 17 16"><path d="M16 0V15H1Z" fill="#b4b4b4"/></svg><div style="position:absolute;left:656px;top:238px;width:199px;height:24px;background:#d2d2d2"></div><div style="position:absolute;left:656px;top:259px;width:199px;height:3px;background:#217346"></div><div style="position:absolute;left:70px;top:238px;width:1px;height:24px;background:#c8c8c8"></div><div style="position:absolute;left:508px;top:238px;width:1px;height:24px;background:#c8c8c8"></div><div style="position:absolute;left:571px;top:238px;width:1px;height:24px;background:#c8c8c8"></div><div style="position:absolute;left:656px;top:238px;width:1px;height:24px;background:#c8c8c8"></div><div style="position:absolute;left:754px;top:238px;width:1px;height:24px;background:#c8c8c8"></div><div style="position:absolute;left:855px;top:238px;width:1px;height:24px;background:#c8c8c8"></div><div style="position:absolute;left:26px;top:238px;width:1px;height:24px;background:#c8c8c8"></div><div style="position:absolute;left:44.00px;top:242.80px;white-space:pre;font-family:'Liberation Sans', sans-serif;font-size:15px;line-height:15px;font-weight:normal;color:#222;">A</div><div style="position:absolute;left:284.75px;top:242.80px;white-space:pre;font-family:'Liberation Sans', sans-serif;font-size:15px;line-height:15px;font-weight:normal;color:#222;">B</div><div style="position:absolute;left:534.50px;top:242.80px;white-space:pre;font-family:'Liberation Sans', sans-serif;font-size:15px;line-height:15px;font-weight:normal;color:#222;">C</div><div style="position:absolute;left:608.30px;top:242.80px;white-space:pre;font-family:'Liberation Sans', sans-serif;font-size:15px;line-height:15px;font-weight:normal;color:#222;">D</div><div style="position:absolute;left:699.70px;top:242.80px;white-space:pre;font-family:'Liberation Sans', sans-serif;font-size:15px;line-height:15px;font-weight:normal;color:#217346;">E</div><div style="position:absolute;left:801.10px;top:242.80px;white-space:pre;font-family:'Liberation Sans', sans-serif;font-size:15px;line-height:15px;font-weight:normal;color:#217346;">F</div><div style="position:absolute;left:0px;top:262px;width:27px;height:689px;background:#e6e6e6"></div><div style="position:absolute;left:26px;top:262px;width:1px;height:689px;background:#b8b8b8"></div><div style="position:absolute;left:0px;top:679px;width:27px;height:263px;background:#d2d2d2"></div><div style="position:absolute;left:25px;top:679px;width:2px;height:263px;background:#217346"></div><div style="position:absolute;left:27px;top:262px;width:828px;height:689px;overflow:hidden;background:#fff"><div style="position:absolute;left:-27px;top:-262px;width:881px;height:951px;"><div style="position:absolute;left:27px;top:287px;width:828px;height:1px;background:#d9d9d9"></div><div style="position:absolute;left:27px;top:313px;width:828px;height:1px;background:#d9d9d9"></div><div style="position:absolute;left:27px;top:339px;width:828px;height:1px;background:#d9d9d9"></div><div style="position:absolute;left:27px;top:380px;width:828px;height:1px;background:#d9d9d9"></div><div style="position:absolute;left:27px;top:406px;width:828px;height:1px;background:#d9d9d9"></div><div style="position:absolute;left:27px;top:432px;width:828px;height:1px;background:#d9d9d9"></div><div style="position:absolute;left:27px;top:458px;width:828px;height:1px;background:#d9d9d9"></div><div style="position:absolute;left:27px;top:484px;width:828px;height:1px;background:#d9d9d9"></div><div style="position:absolute;left:27px;top:510px;width:828px;height:1px;background:#d9d9d9"></div><div style="position:absolute;left:27px;top:536px;width:828px;height:1px;background:#d9d9d9"></div><div style="position:absolute;left:27px;top:562px;width:828px;height:1px;background:#d9d9d9"></div><div style="position:absolute;left:70px;top:262px;width:1px;height:25px;background:#d9d9d9"></div><div style="position:absolute;left:70px;top:287px;width:1px;height:26px;background:#d9d9d9"></div><div style="position:absolute;left:70px;top:313px;width:1px;height:26px;background:#d9d9d9"></div><div style="position:absolute;left:70px;top:380px;width:1px;height:26px;background:#d9d9d9"></div><div style="position:absolute;left:70px;top:406px;width:1px;height:26px;background:#d9d9d9"></div><div style="position:absolute;left:70px;top:432px;width:1px;height:26px;background:#d9d9d9"></div><div style="position:absolute;left:70px;top:458px;width:1px;height:26px;background:#d9d9d9"></div><div style="position:absolute;left:70px;top:536px;width:1px;height:26px;background:#d9d9d9"></div><div style="position:absolute;left:571px;top:262px;width:1px;height:25px;background:#d9d9d9"></div><div style="position:absolute;left:571px;top:287px;width:1px;height:26px;background:#d9d9d9"></div><div style="position:absolute;left:571px;top:313px;width:1px;height:26px;background:#d9d9d9"></div><div style="position:absolute;left:571px;top:458px;width:1px;height:26px;background:#d9d9d9"></div><div style="position:absolute;left:571px;top:484px;width:1px;height:26px;background:#d9d9d9"></div><div style="position:absolute;left:571px;top:536px;width:1px;height:26px;background:#d9d9d9"></div><div style="position:absolute;left:656px;top:406px;width:1px;height:26px;background:#d9d9d9"></div><div style="position:absolute;left:656px;top:432px;width:1px;height:26px;background:#d9d9d9"></div><div style="position:absolute;left:656px;top:458px;width:1px;height:26px;background:#d9d9d9"></div><div style="position:absolute;left:656px;top:484px;width:1px;height:26px;background:#d9d9d9"></div><div style="position:absolute;left:656px;top:536px;width:1px;height:26px;background:#d9d9d9"></div><div style="position:absolute;left:754px;top:406px;width:1px;height:26px;background:#d9d9d9"></div><div style="position:absolute;left:754px;top:432px;width:1px;height:26px;background:#d9d9d9"></div><div style="position:absolute;left:754px;top:458px;width:1px;height:26px;background:#d9d9d9"></div><div style="position:absolute;left:754px;top:484px;width:1px;height:26px;background:#d9d9d9"></div><div style="position:absolute;left:754px;top:536px;width:1px;height:26px;background:#d9d9d9"></div><div style="position:absolute;left:27px;top:610px;width:629px;height:23px;background:#66ccff"></div><div style="position:absolute;left:656px;top:679px;width:199px;height:263px;background:#c6c6c6"></div><div style="position:absolute;left:657px;top:680px;width:97px;height:29px;background:#fff"></div><div style="position:absolute;left:36px;top:268px;width:107px;height:66px;background:#0030e6"></div><svg style="position:absolute;left:36px;top:268px;" width="107" height="66" viewBox="0 0 107 66"><polygon points="53.50,7.00 54.50,9.62 57.30,9.76 55.12,11.53 55.85,14.24 53.50,12.70 51.15,14.24 51.88,11.53 49.70,9.76 52.50,9.62" fill="#ffdd00"/><polygon points="65.50,9.95 66.50,12.57 69.30,12.71 67.12,14.47 67.85,17.18 65.50,15.65 63.15,17.18 63.88,14.47 61.70,12.71 64.50,12.57" fill="#ffdd00"/><polygon points="74.28,18.00 75.28,20.62 78.09,20.76 75.90,22.53 76.64,25.24 74.28,23.70 71.93,25.24 72.67,22.53 70.48,20.76 73.29,20.62" fill="#ffdd00"/><polygon points="77.50,29.00 78.50,31.62 81.30,31.76 79.12,33.53 79.85,36.24 77.50,34.70 75.15,36.24 75.88,33.53 73.70,31.76 76.50,31.62" fill="#ffdd00"/><polygon points="74.28,40.00 75.28,42.62 78.09,42.76 75.90,44.53 76.64,47.24 74.28,45.70 71.93,47.24 72.67,44.53 70.48,42.76 73.29,42.62" fill="#ffdd00"/><polygon points="65.50,48.05 66.50,50.68 69.30,50.82 67.12,52.58 67.85,55.29 65.50,53.75 63.15,55.29 63.88,52.58 61.70,50.82 64.50,50.68" fill="#ffdd00"/><polygon points="53.50,51.00 54.50,53.62 57.30,53.76 55.12,55.53 55.85,58.24 53.50,56.70 51.15,58.24 51.88,55.53 49.70,53.76 52.50,53.62" fill="#ffdd00"/><polygon points="41.50,48.05 42.50,50.68 45.30,50.82 43.12,52.58 43.85,55.29 41.50,53.75 39.15,55.29 39.88,52.58 37.70,50.82 40.50,50.68" fill="#ffdd00"/><polygon points="32.72,40.00 33.71,42.62 36.52,42.76 34.33,44.53 35.07,47.24 32.72,45.70 30.36,47.24 31.10,44.53 28.91,42.76 31.72,42.62" fill="#ffdd00"/><polygon points="29.50,29.00 30.50,31.62 33.30,31.76 31.12,33.53 31.85,36.24 29.50,34.70 27.15,36.24 27.88,33.53 25.70,31.76 28.50,31.62" fill="#ffdd00"/><polygon points="32.72,18.00 33.71,20.62 36.52,20.76 34.33,22.53 35.07,25.24 32.72,23.70 30.36,25.24 31.10,22.53 28.91,20.76 31.72,20.62" fill="#ffdd00"/><polygon points="41.50,9.95 42.50,12.57 45.30,12.71 43.12,14.47 43.85,17.18 41.50,15.65 39.15,17.18 39.88,14.47 37.70,12.71 40.50,12.57" fill="#ffdd00"/></svg><div style="position:absolute;left:149.10px;top:288.69px;white-space:pre;font-family:'Liberation Sans', sans-serif;font-size:11px;line-height:11px;font-weight:normal;color:#333;transform:scaleX(0.9865);transform-origin:0.90px 0;">ЕВРОПЕЙСКИ СЪЮЗ</div><div style="position:absolute;left:149.30px;top:300.96px;white-space:pre;font-family:'Liberation Sans', sans-serif;font-size:9.5px;line-height:9.5px;font-weight:normal;color:#333;transform:scaleX(0.9455);transform-origin:0.70px 0;">ЕВРОПЕЙСКИ ФОНД ЗА</div><div style="position:absolute;left:149.30px;top:310.96px;white-space:pre;font-family:'Liberation Sans', sans-serif;font-size:9.5px;line-height:9.5px;font-weight:normal;color:#333;transform:scaleX(0.9463);transform-origin:0.70px 0;">РЕГИОНАЛНО РАЗВИТИЕ</div><div style="position:absolute;left:598px;top:262px;width:257px;height:78px;background:#fff"></div><svg style="position:absolute;left:611px;top:270px;" width="100" height="69" viewBox="0 0 100 69"><defs><linearGradient id="gg" x1="0" x2="1"><stop offset="0" stop-color="#009a10"/><stop offset="0.5" stop-color="#22e020"/><stop offset="1" stop-color="#22ee22"/></linearGradient><linearGradient id="gw" x1="0" x2="0" y1="0" y2="1"><stop offset="0" stop-color="#f0f0f0"/><stop offset="1" stop-color="#cfcfcf"/></linearGradient><linearGradient id="gy" x1="0" x2="1"><stop offset="0" stop-color="#f2c800"/><stop offset="0.4" stop-color="#ffee00"/><stop offset="1" stop-color="#ffff00"/></linearGradient></defs><path d="M0 23.8 C10 23 16 22.5 22 21.6 C35 19 45 15 52 12.5 C62 9 72 4 81.7 0.5 L98.5 0 C90 5 82 8 74.6 11.1 C66 15 58 18 52 20.2 C45 23 38 24.5 31 25.9 C20 28 10 30 0 32.2Z" fill="url(#gg)"/><path d="M0 39.9 C10 41 20 43.5 28.2 45.6 C36 47.5 43 50.5 49.3 53.3 C62 59 74 64 83.8 68 L74.6 68 C68 65 62 63.5 56.4 61.7 C46 58 37 54 28.2 51.9 C18 49.5 9 48.3 0 47.7Z" fill="url(#gy)"/><path d="M22 0 H30.8 L25.4 68 H15.3Z" fill="url(#gw)" stroke="#fff" stroke-width="1.6"/><path d="M38 0.5 H47 C52 20 65 42 98.5 68 H77.5 C58 50 45 28 38 0.5Z" fill="#e8141c"/><path d="M83 11 L87.3 10.5 V19.5 C68 30 50 47 38 68 H27.5 C42 42 60 22 83 11Z" fill="#1a40e0"/></svg><div style="position:absolute;left:709.30px;top:290.14px;white-space:pre;font-family:'Liberation Sans', sans-serif;font-size:5.5px;line-height:5.5px;font-weight:normal;color:#777;letter-spacing:3.39px">ОПЕРАТИВНА ПРОГРАМА</div><div style="position:absolute;left:708.80px;top:297.73px;white-space:pre;font-family:'Liberation Sans', sans-serif;font-size:10.6px;line-height:10.6px;font-weight:bold;color:#4a4a4a;transform:scaleX(1.1884);transform-origin:0.70px 0;">РЕГИОНИ В РАСТЕЖ</div><div style="position:absolute;left:27px;top:633px;width:828px;height:1px;background:#000"></div><div style="position:absolute;left:27px;top:679px;width:828px;height:1px;background:#000"></div><div style="position:absolute;left:27px;top:709px;width:828px;height:1px;background:#000"></div><div style="position:absolute;left:27px;top:734px;width:828px;height:1px;background:#000"></div><div style="position:absolute;left:27px;top:848px;width:828px;height:1px;background:#000"></div><div style="position:absolute;left:27px;top:872px;width:828px;height:1px;background:#000"></div><div style="position:absolute;left:27px;top:896px;width:828px;height:1px;background:#000"></div><div style="position:absolute;left:27px;top:942px;width:828px;height:1px;background:#000"></div><div style="position:absolute;left:27px;top:609px;width:828px;height:1px;background:#aaa"></div><div style="position:absolute;left:70px;top:609px;width:1px;height:342px;background:#000"></div><div style="position:absolute;left:571px;top:609px;width:1px;height:342px;background:#000"></div><div style="position:absolute;left:656px;top:609px;width:1px;height:342px;background:#000"></div><div style="position:absolute;left:754px;top:609px;width:1px;height:342px;background:#000"></div><div style="position:absolute;left:27px;top:778px;width:828px;height:2px;background:repeating-linear-gradient(90deg,#0000c0 0 9px,transparent 9px 12px)"></div><div style="position:absolute;left:508px;top:262px;width:1px;height:689px;background:#a0a0a0"></div><div style="position:absolute;left:656px;top:679px;width:199px;height:2px;background:#217346"></div><div style="position:absolute;left:655px;top:679px;width:2px;height:264px;background:#217346"></div><div style="position:absolute;left:656px;top:941px;width:199px;height:2px;background:#217346"></div><div style="position:absolute;left:27px;top:262px;width:828px;height:1px;background:#0000d0"></div><div style="position:absolute;left:27px;top:262px;width:1px;height:689px;background:#0000d0"></div><div style="position:absolute;left:29.00px;top:361.58px;white-space:pre;font-family:'Liberation Sans', sans-serif;font-size:15.5px;line-height:15.5px;font-weight:bold;color:#000;transform:scaleX(1.0810);transform-origin:1.00px 0;">Предмет:,,Реконструкция, ремонт и внедряване на мерки за енергийна ефективност на</div><div style="position:absolute;left:78.10px;top:387.68px;white-space:pre;font-family:'Liberation Sans', sans-serif;font-size:15.5px;line-height:15.5px;font-weight:bold;color:#000;transform:scaleX(1.0186);transform-origin:0.60px 0;">образователни институции, във връзка с реализацията на проект по Оперативна програма</div><div style="position:absolute;left:72.90px;top:413.68px;white-space:pre;font-family:'Liberation Sans', sans-serif;font-size:15.5px;line-height:15.5px;font-weight:bold;color:#000;transform:scaleX(1.0357);transform-origin:1.10px 0;">„Региони в растеж” 2014-2020 година по шест обособени позиции&quot;</div><div style="position:absolute;left:73.70px;top:439.58px;white-space:pre;font-family:'Liberation Sans', sans-serif;font-size:15.5px;line-height:15.5px;font-weight:bold;color:#000;transform:scaleX(1.0229);transform-origin:0.30px 0;">За изпълнение на Обособена позиция № 3 – „Ремонт и обновяване на ДГ „Дъга“, град Враца&quot;</div><div style="position:absolute;left:28.80px;top:491.00px;white-space:pre;font-family:'Liberation Sans', sans-serif;font-size:15px;line-height:15px;font-weight:normal;color:#000;transform:scaleX(1.1329);transform-origin:1.20px 0;">Възложител:</div><div style="position:absolute;left:135.40px;top:491.00px;white-space:pre;font-family:'Liberation Sans', sans-serif;font-size:15px;line-height:15px;font-weight:bold;color:#000;transform:scaleX(1.0908);transform-origin:0.60px 0;">ОБЩИНА ВРАЦА</div><div style="position:absolute;left:29.50px;top:515.42px;white-space:pre;font-family:'Liberation Serif', serif;font-size:18px;line-height:18px;font-weight:bold;color:#000;transform:scaleX(1.1401);transform-origin:0.50px 0;">Участник:</div><div style="position:absolute;left:131.40px;top:517.10px;white-space:pre;font-family:'Liberation Serif', serif;font-size:16px;line-height:16px;font-weight:normal;color:#000;transform:scaleX(1.1365);transform-origin:1.60px 0;">………………………………………………………..</div><div style="position:absolute;left:197.70px;top:584.74px;white-space:pre;font-family:'Liberation Serif', serif;font-size:23px;line-height:23px;font-weight:bold;color:#000;transform:scaleX(1.0068);transform-origin:0.30px 0;">КОЛИЧЕСТВЕНО-СТОЙНОСТНА СМЕТКА</div><div style="position:absolute;left:73.50px;top:613.56px;white-space:pre;font-family:'Liberation Serif', serif;font-size:17px;line-height:17px;font-weight:bold;color:#000;transform:scaleX(1.0692);transform-origin:0.50px 0;">I. НАСТИЛКИ</div><div style="position:absolute;left:39.35px;top:636.92px;white-space:pre;font-family:'Liberation Serif', serif;font-size:18px;line-height:18px;font-weight:normal;color:#000;">14</div><div style="position:absolute;left:73.50px;top:636.92px;white-space:pre;font-family:'Liberation Serif', serif;font-size:18px;line-height:18px;font-weight:normal;color:#000;transform:scaleX(1.0219);transform-origin:0.50px 0;">Изравнителна  пердашена армирана циментова</div><div style="position:absolute;left:73.50px;top:659.72px;white-space:pre;font-family:'Liberation Serif', serif;font-size:18px;line-height:18px;font-weight:normal;color:#000;transform:scaleX(1.0167);transform-origin:0.50px 0;">замазка 4см -при ремонти</div><div style="position:absolute;left:530.05px;top:636.92px;white-space:pre;font-family:'Liberation Serif', serif;font-size:18px;line-height:18px;font-weight:normal;color:#000;">м2</div><div style="position:absolute;left:603.40px;top:636.92px;white-space:pre;font-family:'Liberation Serif', serif;font-size:18px;line-height:18px;font-weight:normal;color:#000;">131.52</div><div style="position:absolute;left:719.10px;top:636.92px;white-space:pre;font-family:'Liberation Serif', serif;font-size:18px;line-height:18px;font-weight:normal;color:#000;">9.90</div><div style="position:absolute;left:789.70px;top:636.92px;white-space:pre;font-family:'Liberation Serif', serif;font-size:18px;line-height:18px;font-weight:normal;color:#000;">1,302.05</div><div style="position:absolute;left:39.60px;top:682.62px;white-space:pre;font-family:'Liberation Serif', serif;font-size:18px;line-height:18px;font-weight:normal;color:#000;">15</div><div style="position:absolute;left:73.50px;top:682.62px;white-space:pre;font-family:'Liberation Serif', serif;font-size:18px;line-height:18px;font-weight:normal;color:#000;transform:scaleX(1.0217);transform-origin:0.50px 0;">Под килимена подова изолация от 3см стиродур</div><div style="position:absolute;left:530.05px;top:682.62px;white-space:pre;font-family:'Liberation Serif', serif;font-size:18px;line-height:18px;font-weight:normal;color:#000;">м2</div><div style="position:absolute;left:603.40px;top:682.62px;white-space:pre;font-family:'Liberation Serif', serif;font-size:18px;line-height:18px;font-weight:normal;color:#000;">131.52</div><div style="position:absolute;left:39.50px;top:712.12px;white-space:pre;font-family:'Liberation Serif', serif;font-size:18px;line-height:18px;font-weight:normal;color:#000;">16</div><div style="position:absolute;left:73.90px;top:712.12px;white-space:pre;font-family:'Liberation Serif', serif;font-size:18px;line-height:18px;font-weight:normal;color:#000;transform:scaleX(1.0202);transform-origin:0.10px 0;">Доставка и редене на ламиниран паркет</div><div style="position:absolute;left:530.05px;top:712.12px;white-space:pre;font-family:'Liberation Serif', serif;font-size:18px;line-height:18px;font-weight:normal;color:#000;">м2</div><div style="position:absolute;left:603.40px;top:712.12px;white-space:pre;font-family:'Liberation Serif', serif;font-size:18px;line-height:18px;font-weight:normal;color:#000;">131.52</div><div style="position:absolute;left:39.50px;top:736.22px;white-space:pre;font-family:'Liberation Serif', serif;font-size:18px;line-height:18px;font-weight:normal;color:#000;">17</div><div style="position:absolute;left:73.90px;top:736.22px;white-space:pre;font-family:'Liberation Serif', serif;font-size:18px;line-height:18px;font-weight:normal;color:#000;transform:scaleX(1.0239);transform-origin:0.10px 0;">Доставка и направа на керамична настилка от</div><div style="position:absolute;left:73.70px;top:759.02px;white-space:pre;font-family:'Liberation Serif', serif;font-size:18px;line-height:18px;font-weight:normal;color:#000;transform:scaleX(1.0081);transform-origin:0.30px 0;">непързалящ се гранитогрес/теракот</div><div style="position:absolute;left:530.05px;top:736.22px;white-space:pre;font-family:'Liberation Serif', serif;font-size:18px;line-height:18px;font-weight:normal;color:#000;">м2</div><div style="position:absolute;left:603.10px;top:736.22px;white-space:pre;font-family:'Liberation Serif', serif;font-size:18px;line-height:18px;font-weight:normal;color:#000;">512.00</div><div style="position:absolute;left:39.55px;top:782.42px;white-space:pre;font-family:'Liberation Serif', serif;font-size:18px;line-height:18px;font-weight:normal;color:#000;">18</div><div style="position:absolute;left:73.50px;top:782.42px;white-space:pre;font-family:'Liberation Serif', serif;font-size:18px;line-height:18px;font-weight:normal;color:#000;transform:scaleX(1.0237);transform-origin:0.50px 0;">Полагане на топлоизолация  на подове с XPS 50мм(</div><div style="position:absolute;left:73.70px;top:805.22px;white-space:pre;font-family:'Liberation Serif', serif;font-size:18px;line-height:18px;font-weight:normal;color:#000;transform:scaleX(1.0169);transform-origin:0.30px 0;">включително армирана мрежа, изравнителна</div><div style="position:absolute;left:73.70px;top:828.02px;white-space:pre;font-family:'Liberation Serif', serif;font-size:18px;line-height:18px;font-weight:normal;color:#000;transform:scaleX(1.0272);transform-origin:0.30px 0;">шпакловка)</div><div style="position:absolute;left:530.05px;top:782.42px;white-space:pre;font-family:'Liberation Serif', serif;font-size:18px;line-height:18px;font-weight:normal;color:#000;">м2</div><div style="position:absolute;left:603.10px;top:782.42px;white-space:pre;font-family:'Liberation Serif', serif;font-size:18px;line-height:18px;font-weight:normal;color:#000;">512.00</div><div style="position:absolute;left:39.60px;top:851.72px;white-space:pre;font-family:'Liberation Serif', serif;font-size:18px;line-height:18px;font-weight:normal;color:#000;">19</div><div style="position:absolute;left:73.50px;top:851.72px;white-space:pre;font-family:'Liberation Serif', serif;font-size:18px;line-height:18px;font-weight:normal;color:#000;transform:scaleX(1.0194);transform-origin:0.50px 0;">Циментова замазка за наклони с деб.4см.</div><div style="position:absolute;left:530.05px;top:851.72px;white-space:pre;font-family:'Liberation Serif', serif;font-size:18px;line-height:18px;font-weight:normal;color:#000;">м2</div><div style="position:absolute;left:603.10px;top:851.72px;white-space:pre;font-family:'Liberation Serif', serif;font-size:18px;line-height:18px;font-weight:normal;color:#000;">512.00</div><div style="position:absolute;left:39.95px;top:875.92px;white-space:pre;font-family:'Liberation Serif', serif;font-size:18px;line-height:18px;font-weight:normal;color:#000;">20</div><div style="position:absolute;left:73.70px;top:875.92px;white-space:pre;font-family:'Liberation Serif', serif;font-size:18px;line-height:18px;font-weight:normal;color:#000;transform:scaleX(1.0144);transform-origin:0.30px 0;">Хидроизолация мазана еластична -два пласта</div><div style="position:absolute;left:530.05px;top:875.92px;white-space:pre;font-family:'Liberation Serif', serif;font-size:18px;line-height:18px;font-weight:normal;color:#000;">м2</div><div style="position:absolute;left:603.10px;top:875.92px;white-space:pre;font-family:'Liberation Serif', serif;font-size:18px;line-height:18px;font-weight:normal;color:#000;">512.00</div><div style="position:absolute;left:40.15px;top:899.22px;white-space:pre;font-family:'Liberation Serif', serif;font-size:18px;line-height:18px;font-weight:normal;color:#000;">21</div><div style="position:absolute;left:73.90px;top:899.22px;white-space:pre;font-family:'Liberation Serif', serif;font-size:18px;line-height:18px;font-weight:normal;color:#000;transform:scaleX(1.0239);transform-origin:0.10px 0;">Доставка и направа на керамична настилка от</div><div style="position:absolute;left:73.40px;top:922.02px;white-space:pre;font-family:'Liberation Serif', serif;font-size:18px;line-height:18px;font-weight:normal;color:#000;transform:scaleX(1.0172);transform-origin:0.60px 0;">студеноустойчив непързалящ се гранитогрес</div><div style="position:absolute;left:530.05px;top:899.22px;white-space:pre;font-family:'Liberation Serif', serif;font-size:18px;line-height:18px;font-weight:normal;color:#000;">м2</div><div style="position:absolute;left:603.10px;top:899.22px;white-space:pre;font-family:'Liberation Serif', serif;font-size:18px;line-height:18px;font-weight:normal;color:#000;">184.40</div><div style="position:absolute;left:40.10px;top:946.42px;white-space:pre;font-family:'Liberation Serif', serif;font-size:18px;line-height:18px;font-weight:normal;color:#000;">22</div><div style="position:absolute;left:73.50px;top:946.42px;white-space:pre;font-family:'Liberation Serif', serif;font-size:18px;line-height:18px;font-weight:normal;color:#000;transform:scaleX(1.0237);transform-origin:0.50px 0;">Полагане на топлоизолация  на подове с XPS 50мм(</div><div style="position:absolute;left:530.05px;top:946.42px;white-space:pre;font-family:'Liberation Serif', serif;font-size:18px;line-height:18px;font-weight:normal;color:#000;">м2</div><div style="position:absolute;left:603.10px;top:946.42px;white-space:pre;font-family:'Liberation Serif', serif;font-size:18px;line-height:18px;font-weight:normal;color:#000;">184.40</div><div style="position:absolute;left:710.50px;top:946.42px;white-space:pre;font-family:'Liberation Serif', serif;font-size:18px;line-height:18px;font-weight:normal;color:#000;">30.61</div><div style="position:absolute;left:789.60px;top:946.42px;white-space:pre;font-family:'Liberation Serif', serif;font-size:18px;line-height:18px;font-weight:normal;color:#000;">5,651.68</div></div></div><div style="position:absolute;left:4.80px;top:268.70px;white-space:pre;font-family:'Liberation Sans', sans-serif;font-size:15px;line-height:15px;font-weight:normal;color:#222;">1</div><div style="position:absolute;left:0px;top:287px;width:27px;height:1px;background:#c8c8c8"></div><div style="position:absolute;left:5.05px;top:294.70px;white-space:pre;font-family:'Liberation Sans', sans-serif;font-size:15px;line-height:15px;font-weight:normal;color:#222;">2</div><div style="position:absolute;left:0px;top:313px;width:27px;height:1px;background:#c8c8c8"></div><div style="position:absolute;left:5.10px;top:320.70px;white-space:pre;font-family:'Liberation Sans', sans-serif;font-size:15px;line-height:15px;font-weight:normal;color:#222;">3</div><div style="position:absolute;left:0px;top:339px;width:27px;height:1px;background:#c8c8c8"></div><div style="position:absolute;left:5.05px;top:361.70px;white-space:pre;font-family:'Liberation Sans', sans-serif;font-size:15px;line-height:15px;font-weight:normal;color:#222;">4</div><div style="position:absolute;left:0px;top:380px;width:27px;height:1px;background:#c8c8c8"></div><div style="position:absolute;left:5.00px;top:387.70px;white-space:pre;font-family:'Liberation Sans', sans-serif;font-size:15px;line-height:15px;font-weight:normal;color:#222;">5</div><div style="position:absolute;left:0px;top:406px;width:27px;height:1px;background:#c8c8c8"></div><div style="position:absolute;left:5.00px;top:413.70px;white-space:pre;font-family:'Liberation Sans', sans-serif;font-size:15px;line-height:15px;font-weight:normal;color:#222;">6</div><div style="position:absolute;left:0px;top:432px;width:27px;height:1px;background:#c8c8c8"></div><div style="position:absolute;left:5.05px;top:439.70px;white-space:pre;font-family:'Liberation Sans', sans-serif;font-size:15px;line-height:15px;font-weight:normal;color:#222;">7</div><div style="position:absolute;left:0px;top:458px;width:27px;height:1px;background:#c8c8c8"></div><div style="position:absolute;left:5.05px;top:465.70px;white-space:pre;font-family:'Liberation Sans', sans-serif;font-size:15px;line-height:15px;font-weight:normal;color:#222;">8</div><div style="position:absolute;left:0px;top:484px;width:27px;height:1px;background:#c8c8c8"></div><div style="position:absolute;left:5.00px;top:491.70px;white-space:pre;font-family:'Liberation Sans', sans-serif;font-size:15px;line-height:15px;font-weight:normal;color:#222;">9</div><div style="position:absolute;left:0px;top:510px;width:27px;height:1px;background:#c8c8c8"></div><div style="position:absolute;left:0.60px;top:517.70px;white-space:pre;font-family:'Liberation Sans', sans-serif;font-size:15px;line-height:15px;font-weight:normal;color:#222;">10</div><div style="position:absolute;left:0px;top:536px;width:27px;height:1px;background:#c8c8c8"></div><div style="position:absolute;left:1.20px;top:543.70px;white-space:pre;font-family:'Liberation Sans', sans-serif;font-size:15px;line-height:15px;font-weight:normal;color:#222;">11</div><div style="position:absolute;left:0px;top:562px;width:27px;height:1px;background:#c8c8c8"></div><div style="position:absolute;left:0.70px;top:590.70px;white-space:pre;font-family:'Liberation Sans', sans-serif;font-size:15px;line-height:15px;font-weight:normal;color:#222;">12</div><div style="position:absolute;left:0px;top:609px;width:27px;height:1px;background:#c8c8c8"></div><div style="position:absolute;left:0.80px;top:614.70px;white-space:pre;font-family:'Liberation Sans', sans-serif;font-size:15px;line-height:15px;font-weight:normal;color:#222;">34</div><div style="position:absolute;left:0px;top:633px;width:27px;height:1px;background:#c8c8c8"></div><div style="position:absolute;left:0.90px;top:660.70px;white-space:pre;font-family:'Liberation Sans', sans-serif;font-size:15px;line-height:15px;font-weight:normal;color:#222;">35</div><div style="position:absolute;left:0px;top:679px;width:27px;height:1px;background:#c8c8c8"></div><div style="position:absolute;left:0.95px;top:690.70px;white-space:pre;font-family:'Liberation Sans', sans-serif;font-size:15px;line-height:15px;font-weight:normal;color:#217346;">36</div><div style="position:absolute;left:0px;top:709px;width:25px;height:1px;background:#c8c8c8"></div><div style="position:absolute;left:1.00px;top:715.70px;white-space:pre;font-family:'Liberation Sans', sans-serif;font-size:15px;line-height:15px;font-weight:normal;color:#217346;">37</div><div style="position:absolute;left:0px;top:734px;width:25px;height:1px;background:#c8c8c8"></div><div style="position:absolute;left:0.95px;top:760.70px;white-space:pre;font-family:'Liberation Sans', sans-serif;font-size:15px;line-height:15px;font-weight:normal;color:#217346;">38</div><div style="position:absolute;left:0px;top:779px;width:25px;height:1px;background:#c8c8c8"></div><div style="position:absolute;left:0.95px;top:829.70px;white-space:pre;font-family:'Liberation Sans', sans-serif;font-size:15px;line-height:15px;font-weight:normal;color:#217346;">39</div><div style="position:absolute;left:0px;top:848px;width:25px;height:1px;background:#c8c8c8"></div><div style="position:absolute;left:1.00px;top:853.70px;white-space:pre;font-family:'Liberation Sans', sans-serif;font-size:15px;line-height:15px;font-weight:normal;color:#217346;">40</div><div style="position:absolute;left:0px;top:872px;width:25px;height:1px;background:#c8c8c8"></div><div style="position:absolute;left:1.05px;top:877.70px;white-space:pre;font-family:'Liberation Sans', sans-serif;font-size:15px;line-height:15px;font-weight:normal;color:#217346;">41</div><div style="position:absolute;left:0px;top:896px;width:25px;height:1px;background:#c8c8c8"></div><div style="position:absolute;left:1.10px;top:923.70px;white-space:pre;font-family:'Liberation Sans', sans-serif;font-size:15px;line-height:15px;font-weight:normal;color:#217346;">42</div><div style="position:absolute;left:0px;top:942px;width:25px;height:1px;background:#c8c8c8"></div><div style="position:absolute;left:855px;top:238px;width:26px;height:713px;background:#dedede"></div><div style="position:absolute;left:860px;top:241px;width:18px;height:17px;background:#fff;border:1px solid #d0d0d0;box-sizing:border-box"></div><svg style="position:absolute;left:864px;top:246px;" width="10" height="6" viewBox="0 0 10 6"><path d="M0 6L5 1L10 6Z" fill="#777"/></svg><div style="position:absolute;left:860px;top:297px;width:18px;height:20px;background:#fff;border:1px solid #cfcfcf;box-sizing:border-box"></div><div style="position:absolute;left:860px;top:933px;width:18px;height:17px;background:#fff;border:1px solid #d0d0d0;box-sizing:border-box"></div><svg style="position:absolute;left:864px;top:939px;" width="10" height="6" viewBox="0 0 10 6"><path d="M0 0L5 5L10 0Z" fill="#777"/></svg><div style="position:absolute;left:0px;top:951px;width:881px;height:29px;background:#e6e6e6"></div><div style="position:absolute;left:0px;top:951px;width:95px;height:1px;background:#c6c6c6"></div><div style="position:absolute;left:257px;top:951px;width:624px;height:1px;background:#c6c6c6"></div><svg style="position:absolute;left:19px;top:961px;" width="6" height="10" viewBox="0 0 6 10"><path d="M6 0V10L0 5Z" fill="#bcbcbc"/></svg><svg style="position:absolute;left:48px;top:961px;" width="6" height="10" viewBox="0 0 6 10"><path d="M0 0V10L6 5Z" fill="#bcbcbc"/></svg><div style="position:absolute;left:95px;top:951px;width:163px;height:26px;background:#fff;border-left:1px solid #c6c6c6;border-right:1px solid #c6c6c6;box-sizing:border-box"></div><div style="position:absolute;left:96px;top:975px;width:161px;height:2px;background:#217346"></div><div style="position:absolute;left:106.50px;top:953.96px;white-space:pre;font-family:'Liberation Sans', sans-serif;font-size:16px;line-height:16px;font-weight:bold;color:#217346;transform:scaleX(1.0751);transform-origin:1.00px 0;">КСС-Об Поз № 3</div><svg style="position:absolute;left:290px;top:956px;" width="22" height="21" viewBox="0 0 22 21"><circle cx="11" cy="10.5" r="9.5" stroke="#666" stroke-width="1.3" fill="none"/><path d="M11 5V16M5.5 10.5H16.5" stroke="#666" stroke-width="1.5"/></svg><svg style="position:absolute;left:522px;top:957px;" width="4" height="17" viewBox="0 0 4 17"><circle cx="2" cy="2" r="1.5" fill="#aaa"/><circle cx="2" cy="8.5" r="1.5" fill="#aaa"/><circle cx="2" cy="15" r="1.5" fill="#aaa"/></svg><div style="position:absolute;left:541px;top:956px;width:313px;height:19px;background:#dadada"></div><div style="position:absolute;left:541px;top:956px;width:19px;height:19px;background:#fff;border:1px solid #cfcfcf;box-sizing:border-box"></div><svg style="position:absolute;left:547px;top:961px;" width="6" height="9" viewBox="0 0 6 9"><path d="M6 0V9L0 4.5Z" fill="#666"/></svg><div style="position:absolute;left:560px;top:956px;width:21px;height:19px;background:#fff;border:1px solid #cfcfcf;box-sizing:border-box"></div><div style="position:absolute;left:835px;top:956px;width:19px;height:19px;background:#fff;border:1px solid #cfcfcf;box-sizing:border-box"></div><svg style="position:absolute;left:842px;top:961px;" width="6" height="9" viewBox="0 0 6 9"><path d="M0 0V9L6 4.5Z" fill="#666"/></svg><div style="position:absolute;left:0px;top:980px;width:881px;height:27px;background:#f1f1f1"></div><div style="position:absolute;left:0px;top:980px;width:881px;height:1px;background:#d6d6d6"></div><div style="position:absolute;left:-1.10px;top:986.15px;white-space:pre;font-family:'Liberation Sans', sans-serif;font-size:14px;line-height:14px;font-weight:normal;color:#444;transform:scaleX(0.8883);transform-origin:1.10px 0;">Ready</div><svg style="position:absolute;left:543px;top:986px;" width="14" height="14" viewBox="0 0 14 14"><path d="M0.5 0.5H13.5V13.5H0.5ZM0.5 4.8H13.5M0.5 9.2H13.5M4.8 0.5V13.5M9.2 0.5V13.5" stroke="#666" stroke-width="1" fill="none"/></svg><svg style="position:absolute;left:584px;top:986px;" width="15" height="14" viewBox="0 0 15 14"><rect x="0.5" y="0.5" width="14" height="13" stroke="#666" stroke-width="1" fill="none"/><rect x="3.5" y="3" width="8" height="8" stroke="#666" stroke-width="1" fill="none"/><path d="M5 5.5H10M5 8H10" stroke="#666" stroke-width="1"/></svg><div style="position:absolute;left:612px;top:981px;width:41px;height:26px;background:#c8c8c8"></div><svg style="position:absolute;left:625px;top:986px;" width="15" height="14" viewBox="0 0 15 14"><path d="M0.5 0.5H14.5V13.5H0.5ZM7.5 0.5V7.5H0.5M4 0.5V7.5" stroke="#666" stroke-width="1.1" fill="none"/></svg><div style="position:absolute;left:658px;top:992px;width:9px;height:2px;background:#555"></div><div style="position:absolute;left:671px;top:993px;width:125px;height:1px;background:#aaa"></div><div style="position:absolute;left:731px;top:986px;width:5px;height:14px;background:#666"></div><svg style="position:absolute;left:800px;top:987px;" width="12" height="12" viewBox="0 0 12 12"><path d="M6 0V12M0 6H12" stroke="#555" stroke-width="1.8"/></svg><div style="position:absolute;left:828.00px;top:985.65px;white-space:pre;font-family:'Liberation Sans', sans-serif;font-size:14px;line-height:14px;font-weight:normal;color:#555;transform:scaleX(0.8721);transform-origin:1.00px 0;">100%</div><div style="position:absolute;left:881px;top:0px;width:1px;height:1008px;background:#217346"></div><div style="position:absolute;left:0px;top:1007px;width:882px;height:1px;background:#217346"></div></div><div style="position:absolute;left:882px;top:9px;width:1006px;height:1008px;overflow:hidden;"><div style="position:absolute;left:-882px;top:-9px;width:1920px;height:1080px;"><div style="position:absolute;left:882px;top:9px;width:1006px;height:1008px;background:#e6e6e6"></div><div style="position:absolute;left:882px;top:9px;width:1006px;height:72px;background:#217346"></div><svg style="position:absolute;left:909px;top:21px;" width="17" height="16" viewBox="0 0 17 16"><rect x="1" y="1" width="15" height="14" stroke="#ffffff" stroke-width="2" fill="none"/><rect x="4" y="9.5" width="9" height="5.5" fill="#ffffff"/><rect x="6.5" y="11.5" width="2.5" height="3" fill="#217346"/></svg><svg style="position:absolute;left:945px;top:21px;" width="22" height="18" viewBox="0 0 22 18"><path d="M6 5.5H11.5A5.25 5.25 0 0 1 11.5 16H10" stroke="#ffffff" stroke-width="2.4" fill="none"/><path d="M0.5 5.5L7 0.5V10.5Z" fill="#ffffff"/></svg><svg style="position:absolute;left:972px;top:26px;" width="8" height="5" viewBox="0 0 8 5"><path d="M0 0H7L3.5 4Z" fill="#ffffff"/></svg><svg style="position:absolute;left:988px;top:21px;" width="22" height="18" viewBox="0 0 22 18"><path d="M16 5.5H10.5A5.25 5.25 0 0 0 10.5 16H12" stroke="#4f9a6c" stroke-width="2.4" fill="none"/><path d="M21.5 5.5L15 0.5V10.5Z" fill="#4f9a6c"/></svg><svg style="position:absolute;left:1016px;top:26px;" width="8" height="5" viewBox="0 0 8 5"><path d="M0 0H7L3.5 4Z" fill="#4f9a6c"/></svg><svg style="position:absolute;left:1038px;top:26px;" width="8" height="8" viewBox="0 0 8 8"><rect x="0.5" y="0" width="6" height="1.2" fill="#ffffff"/><rect x="0.5" y="2.2" width="6" height="1.2" fill="#ffffff"/><path d="M0 4.5H7L3.5 7.5Z" fill="#ffffff"/></svg><div style="position:absolute;left:1251.50px;top:23.10px;white-space:pre;font-family:'Liberation Sans', sans-serif;font-size:15px;line-height:15px;font-weight:normal;color:#a9cdb6;transform:scaleX(1.0057);transform-origin:0.50px 0;">08. Анализи на единични цени - Excel</div><svg style="position:absolute;left:1678px;top:23px;" width="17" height="13" viewBox="0 0 17 13"><rect x="0.7" y="0.7" width="15.6" height="11.6" stroke="#6fa886" stroke-width="1.3" fill="none"/><path d="M0.7 3.8H16.3M8.5 11V5.5M5.8 8.2L8.5 5.5L11.2 8.2" stroke="#6fa886" stroke-width="1.2" fill="none"/></svg><div style="position:absolute;left:1738px;top:28px;width:12px;height:1.3px;background:#6fa886"></div><svg style="position:absolute;left:1795px;top:23px;" width="13" height="13" viewBox="0 0 13 13"><rect x="0.65" y="0.65" width="11.7" height="11.7" stroke="#6fa886" stroke-width="1.3" fill="none"/></svg><svg style="position:absolute;left:1852px;top:23px;" width="12" height="12" viewBox="0 0 12 12"><path d="M0.5 0.5L11.5 11.5M11.5 0.5L0.5 11.5" stroke="#6fa886" stroke-width="1.3"/></svg><div style="position:absolute;left:960px;top:51px;width:68px;height:30px;background:#f1f1f1"></div><div style="position:absolute;left:906.80px;top:58.20px;white-space:pre;font-family:'Liberation Sans', sans-serif;font-size:15px;line-height:15px;font-weight:normal;color:#fff;transform:scaleX(1.0314);transform-origin:1.20px 0;">File</div><div style="position:absolute;left:1041.70px;top:58.20px;white-space:pre;font-family:'Liberation Sans', sans-serif;font-size:15px;line-height:15px;font-weight:normal;color:#fff;transform:scaleX(0.9972);transform-origin:1.30px 0;">Insert</div><div style="position:absolute;left:1106.80px;top:58.20px;white-space:pre;font-family:'Liberation Sans', sans-serif;font-size:15px;line-height:15px;font-weight:normal;color:#fff;transform:scaleX(0.9590);transform-origin:1.20px 0;">Page Layout</div><div style="position:absolute;left:1215.80px;top:58.20px;white-space:pre;font-family:'Liberation Sans', sans-serif;font-size:15px;line-height:15px;font-weight:normal;color:#fff;transform:scaleX(0.9836);transform-origin:1.20px 0;">Formulas</div><div style="position:absolute;left:1304.80px;top:58.20px;white-space:pre;font-family:'Liberation Sans', sans-serif;font-size:15px;line-height:15px;font-weight:normal;color:#fff;transform:scaleX(1.0164);transform-origin:1.20px 0;">Data</div><div style="position:absolute;left:1365.80px;top:58.20px;white-space:pre;font-family:'Liberation Sans', sans-serif;font-size:15px;line-height:15px;font-weight:normal;color:#fff;transform:scaleX(0.9771);transform-origin:1.20px 0;">Review</div><div style="position:absolute;left:1442.70px;top:58.20px;white-space:pre;font-family:'Liberation Sans', sans-serif;font-size:15px;line-height:15px;font-weight:normal;color:#fff;transform:scaleX(0.9938);transform-origin:0.00px 0;">View</div><div style="position:absolute;left:971.80px;top:58.20px;white-space:pre;font-family:'Liberation Sans', sans-serif;font-size:15px;line-height:15px;font-weight:normal;color:#217346;transform:scaleX(1.0733);transform-origin:1.20px 0;">Home</div><svg style="position:absolute;left:1504px;top:56px;" width="15" height="20" viewBox="0 0 15 20"><path d="M7.5 1A5.8 5.8 0 0 0 3.8 11.3C4.6 12 5 13 5 14H10C10 13 10.4 12 11.2 11.3A5.8 5.8 0 0 0 7.5 1Z" stroke="#fff" stroke-width="1.3" fill="none"/><path d="M5 16H10M6 18.5H9" stroke="#fff" stroke-width="1.3"/></svg><div style="position:absolute;left:1524.70px;top:58.20px;white-space:pre;font-family:'Liberation Sans', sans-serif;font-size:15px;line-height:15px;font-weight:normal;color:#fff;transform:scaleX(1.0082);transform-origin:0.30px 0;">Tell me what you want to do...</div><div style="position:absolute;left:1740.40px;top:58.20px;white-space:pre;font-family:'Liberation Sans', sans-serif;font-size:15px;line-height:15px;font-weight:normal;color:#fff;transform:scaleX(1.0045);transform-origin:0.60px 0;">Sign in</div><div style="position:absolute;left:1796px;top:51px;width:75px;height:30px;background:#135d33"></div><svg style="position:absolute;left:1802px;top:56px;" width="20" height="21" viewBox="0 0 20 21"><circle cx="9" cy="6" r="4.8" stroke="#fff" stroke-width="1.4" fill="none"/><path d="M1 19A8 8 0 0 1 12.5 11.7" stroke="#fff" stroke-width="1.4" fill="none"/><path d="M15 12V20M11 16H19" stroke="#fff" stroke-width="1.4"/></svg><div style="position:absolute;left:1825.40px;top:58.20px;white-space:pre;font-family:'Liberation Sans', sans-serif;font-size:15px;line-height:15px;font-weight:normal;color:#fff;transform:scaleX(0.9536);transform-origin:0.60px 0;">Share</div><div style="position:absolute;left:882px;top:81px;width:1006px;height:111px;background:#f1f1f1"></div><div style="position:absolute;left:882px;top:192px;width:1006px;height:1px;background:#d5d5d5"></div><div style="position:absolute;left:981px;top:86px;width:1px;height:102px;background:#d2d2d2"></div><div style="position:absolute;left:1216px;top:86px;width:1px;height:102px;background:#d2d2d2"></div><div style="position:absolute;left:1346px;top:86px;width:1px;height:102px;background:#d2d2d2"></div><div style="position:absolute;left:1446px;top:86px;width:1px;height:102px;background:#d2d2d2"></div><div style="position:absolute;left:1652px;top:86px;width:1px;height:102px;background:#d2d2d2"></div><div style="position:absolute;left:1752px;top:86px;width:1px;height:102px;background:#d2d2d2"></div><div style="position:absolute;left:1839px;top:86px;width:1px;height:102px;background:#d2d2d2"></div><svg style="position:absolute;left:897px;top:88px;" width="36" height="39" viewBox="0 0 36 39"><rect x="1" y="5" width="24" height="30" rx="2" fill="#e9c27b"/><rect x="6" y="1" width="14" height="7" rx="1.5" fill="#7a7a7a"/><rect x="11" y="2" width="4" height="3" fill="#fff"/><path d="M16 15H27L33 21V38H16Z" fill="#fff" stroke="#666" stroke-width="1.2"/><path d="M27 15V21H33" fill="none" stroke="#666" stroke-width="1"/></svg><div style="position:absolute;left:893.90px;top:133.15px;white-space:pre;font-family:'Liberation Sans', sans-serif;font-size:14px;line-height:14px;font-weight:normal;color:#444;transform:scaleX(0.9677);transform-origin:1.10px 0;">Paste</div><svg style="position:absolute;left:909px;top:156px;" width="7" height="5" viewBox="0 0 7 5"><path d="M0 0H7L3.5 4Z" fill="#666"/></svg><svg style="position:absolute;left:940px;top:88px;" width="18" height="20" viewBox="0 0 18 20"><path d="M4 1L12 12M14 1L6 12" stroke="#6a6a6a" stroke-width="1.6"/><circle cx="5" cy="15.5" r="3.3" stroke="#2e6fbd" stroke-width="1.4" fill="none"/><circle cx="13" cy="15.5" r="3.3" stroke="#2e6fbd" stroke-width="1.4" fill="none"/></svg><svg style="position:absolute;left:940px;top:116px;" width="19" height="20" viewBox="0 0 19 20"><path d="M1 1H9L12 4V14H1Z" fill="#fff" stroke="#6a6a6a" stroke-width="1.2"/><path d="M6 5H14L17 8V19H6Z" fill="#fff" stroke="#6a6a6a" stroke-width="1.2"/><path d="M8.5 11H14.5M8.5 14H14.5M8.5 17H14.5" stroke="#2e6fbd" stroke-width="1.1"/></svg><svg style="position:absolute;left:966px;top:123px;" width="7" height="5" viewBox="0 0 7 5"><path d="M0 0H7L3.5 4Z" fill="#666"/></svg><svg style="position:absolute;left:941px;top:145px;" width="18" height="18" viewBox="0 0 18 18"><path d="M10 8L16 1.5L17.5 3L11 10Z" fill="#6a6a6a"/><path d="M1 13L9 6L12 9L5 17Z" fill="#e9c27b"/></svg><div style="position:absolute;left:892.40px;top:176.00px;white-space:pre;font-family:'Liberation Sans', sans-serif;font-size:13px;line-height:13px;font-weight:normal;color:#555;transform:scaleX(1.0609);transform-origin:0.60px 0;">Clipboard</div><svg style="position:absolute;left:968px;top:179px;" width="9" height="9" viewBox="0 0 9 9"><path d="M0.5 0.5H8.5V8.5H0.5Z" stroke="#888" stroke-width="0.8" fill="none"/><path d="M3 3L7.5 7.5M7.5 4.5V7.5H4.5" stroke="#666" stroke-width="1" fill="none"/></svg><div style="position:absolute;left:986px;top:95px;width:114px;height:27px;background:#fff;border:1px solid #c6c6c6;box-sizing:border-box"></div><div style="position:absolute;left:988.30px;top:102.85px;white-space:pre;font-family:'Liberation Sans', sans-serif;font-size:14px;line-height:14px;font-weight:normal;color:#333;transform:scaleX(1.1155);transform-origin:0.70px 0;">Calibri</div><svg style="position:absolute;left:1089px;top:106px;" width="7" height="5" viewBox="0 0 7 5"><path d="M0 0H7L3.5 4Z" fill="#555"/></svg><div style="position:absolute;left:1100px;top:95px;width:60px;height:27px;background:#fff;border:1px solid #c6c6c6;box-sizing:border-box"></div><div style="position:absolute;left:1103.00px;top:102.85px;white-space:pre;font-family:'Liberation Sans', sans-serif;font-size:14px;line-height:14px;font-weight:normal;color:#333;transform:scaleX(1.0853);transform-origin:1.00px 0;">11</div><svg style="position:absolute;left:1148px;top:106px;" width="7" height="5" viewBox="0 0 7 5"><path d="M0 0H7L3.5 4Z" fill="#555"/></svg><div style="position:absolute;left:1168.00px;top:99.61px;white-space:pre;font-family:'Liberation Sans', sans-serif;font-size:17px;line-height:17px;font-weight:normal;color:#555;transform:scaleX(1.2281);transform-origin:0.00px 0;">A</div><svg style="position:absolute;left:1179px;top:99px;" width="6" height="4" viewBox="0 0 6 4"><path d="M0 4L3 0L6 4Z" fill="#2e6fbd"/></svg><div style="position:absolute;left:1193.00px;top:102.15px;white-space:pre;font-family:'Liberation Sans', sans-serif;font-size:14px;line-height:14px;font-weight:normal;color:#555;transform:scaleX(1.2766);transform-origin:0.00px 0;">A</div><svg style="position:absolute;left:1202px;top:99px;" width="6" height="4" viewBox="0 0 6 4"><path d="M0 0L3 4L6 0Z" fill="#2e6fbd"/></svg><div style="position:absolute;left:992.00px;top:138.30px;white-space:pre;font-family:'Liberation Sans', sans-serif;font-size:15px;line-height:15px;font-weight:bold;color:#444;transform:scaleX(1.1304);transform-origin:1.00px 0;">B</div><div style="position:absolute;left:1019.50px;top:138.44px;white-space:pre;font-family:'Liberation Serif', serif;font-size:15px;line-height:15px;font-weight:normal;color:#444;transform:scaleX(2.5000);transform-origin:0.50px 0;font-style:italic">I</div><div style="position:absolute;left:1042.90px;top:138.30px;white-space:pre;font-family:'Liberation Sans', sans-serif;font-size:15px;line-height:15px;font-weight:normal;color:#444;transform:scaleX(1.3953);transform-origin:1.10px 0;">U</div><div style="position:absolute;left:1044px;top:154px;width:12px;height:1.4px;background:#444"></div><svg style="position:absolute;left:1066px;top:143px;" width="7" height="5" viewBox="0 0 7 5"><path d="M0 0H7L3.5 4Z" fill="#666"/></svg><div style="position:absolute;left:1081px;top:135px;width:1px;height:20px;background:#d5d5d5"></div><svg style="position:absolute;left:1089px;top:136px;" width="19" height="17" viewBox="0 0 19 17"><path d="M0.5 0.5H18.5V16.5H0.5ZM9.5 0.5V16.5M0.5 8.5H18.5" stroke="#999" stroke-width="1" stroke-dasharray="1 1" fill="none"/></svg><svg style="position:absolute;left:1115px;top:143px;" width="7" height="5" viewBox="0 0 7 5"><path d="M0 0H7L3.5 4Z" fill="#666"/></svg><div style="position:absolute;left:1129px;top:135px;width:1px;height:20px;background:#d5d5d5"></div><svg style="position:absolute;left:1137px;top:135px;" width="20" height="20" viewBox="0 0 20 20"><path d="M6 2L13 9L8 14L1 7Z" stroke="#555" stroke-width="1.3" fill="#fff"/><path d="M14 8C16 10 17 12 15.5 13" stroke="#2e6fbd" stroke-width="1.5" fill="none"/><rect x="0" y="15.5" width="20" height="4.5" fill="#ffff00"/></svg><svg style="position:absolute;left:1163px;top:143px;" width="7" height="5" viewBox="0 0 7 5"><path d="M0 0H7L3.5 4Z" fill="#666"/></svg><div style="position:absolute;left:1176.50px;top:135.11px;white-space:pre;font-family:'Liberation Sans', sans-serif;font-size:17px;line-height:17px;font-weight:normal;color:#333;transform:scaleX(1.6667);transform-origin:0.00px 0;">A</div><div style="position:absolute;left:1176px;top:150.5px;width:20px;height:4.5px;background:#ff0000"></div><svg style="position:absolute;left:1202px;top:143px;" width="7" height="5" viewBox="0 0 7 5"><path d="M0 0H7L3.5 4Z" fill="#666"/></svg><div style="position:absolute;left:1076.00px;top:176.00px;white-space:pre;font-family:'Liberation Sans', sans-serif;font-size:13px;line-height:13px;font-weight:normal;color:#555;transform:scaleX(1.0000);transform-origin:1.00px 0;">Font</div><svg style="position:absolute;left:1202px;top:179px;" width="9" height="9" viewBox="0 0 9 9"><path d="M0.5 0.5H8.5V8.5H0.5Z" stroke="#888" stroke-width="0.8" fill="none"/><path d="M3 3L7.5 7.5M7.5 4.5V7.5H4.5" stroke="#666" stroke-width="1" fill="none"/></svg><svg style="position:absolute;left:1225px;top:88px;" width="18" height="9" viewBox="0 0 18 9"><path d="M0 0.5H18" stroke="#666" stroke-width="1.2"/><path d="M0 3.5H18" stroke="#666" stroke-width="1.2"/><path d="M0 7.5H18" stroke="#666" stroke-width="1.2"/></svg><svg style="position:absolute;left:1251px;top:92px;" width="18" height="13" viewBox="0 0 18 13"><path d="M0 0.5H18" stroke="#666" stroke-width="1.2"/><path d="M0 4.5H18" stroke="#666" stroke-width="1.2"/><path d="M0 8.5H18" stroke="#666" stroke-width="1.2"/><path d="M0 11.5H18" stroke="#666" stroke-width="1.2"/></svg><div style="position:absolute;left:1273px;top:85px;width:26px;height:27px;background:#c5c5c5"></div><svg style="position:absolute;left:1277px;top:97px;" width="18" height="12" viewBox="0 0 18 12"><path d="M0 0.5H18" stroke="#666" stroke-width="1.2"/><path d="M0 4.5H18" stroke="#666" stroke-width="1.2"/><path d="M0 8.5H18" stroke="#666" stroke-width="1.2"/><path d="M0 10.5H18" stroke="#666" stroke-width="1.2"/></svg><svg style="position:absolute;left:1306px;top:88px;" width="20" height="19" viewBox="0 0 20 19"><rect x="0.5" y="0.5" width="13" height="4" fill="none" stroke="#666" stroke-width="1"/><rect x="0.5" y="7.5" width="10" height="4" fill="none" stroke="#2e6fbd" stroke-width="1"/><rect x="0.5" y="14" width="10" height="4" fill="none" stroke="#2e6fbd" stroke-width="1"/><path d="M14 7H16A3 3 0 0 1 16 13H12M14 11L12 13L14 15" stroke="#2e6fbd" stroke-width="1.4" fill="none"/></svg><svg style="position:absolute;left:1227px;top:121px;" width="14" height="12" viewBox="0 0 14 12"><path d="M0 0.5H14" stroke="#666" stroke-width="1.2"/><path d="M0 4.0H14" stroke="#666" stroke-width="1.2"/><path d="M0 7.5H14" stroke="#666" stroke-width="1.2"/><path d="M0 10.5H14" stroke="#666" stroke-width="1.2"/></svg><svg style="position:absolute;left:1252px;top:121px;" width="16" height="12" viewBox="0 0 16 12"><path d="M0 0.5H16" stroke="#666" stroke-width="1.2"/><path d="M0 4.0H16" stroke="#666" stroke-width="1.2"/><path d="M0 7.5H16" stroke="#666" stroke-width="1.2"/><path d="M0 10.5H16" stroke="#666" stroke-width="1.2"/></svg><svg style="position:absolute;left:1279px;top:121px;" width="14" height="12" viewBox="0 0 14 12"><path d="M0 0.5H14" stroke="#666" stroke-width="1.2"/><path d="M0 4.0H14" stroke="#666" stroke-width="1.2"/><path d="M0 7.5H14" stroke="#666" stroke-width="1.2"/><path d="M0 10.5H14" stroke="#666" stroke-width="1.2"/></svg><svg style="position:absolute;left:1305px;top:116px;" width="19" height="19" viewBox="0 0 19 19"><rect x="0.6" y="0.6" width="17.8" height="17.8" fill="#fff" stroke="#666" stroke-width="1.2"/><path d="M1 6H18M1 13H18M9.5 1V6M9.5 13V18" stroke="#666" stroke-width="1"/><path d="M3 9.5H16M5.5 7.5L3 9.5L5.5 11.5M13.5 7.5L16 9.5L13.5 11.5" stroke="#2e6fbd" stroke-width="1.3" fill="none"/></svg><svg style="position:absolute;left:1331px;top:123px;" width="7" height="5" viewBox="0 0 7 5"><path d="M0 0H7L3.5 4Z" fill="#666"/></svg><svg style="position:absolute;left:1225px;top:146px;" width="19" height="17" viewBox="0 0 19 17"><path d="M9 1H19M9 5H19M9 9H19M0 13H19M0 16H19" stroke="#666" stroke-width="1.2"/><path d="M7 7H1M4 4L1 7L4 10" stroke="#2e6fbd" stroke-width="1.8" fill="none"/></svg><svg style="position:absolute;left:1251px;top:146px;" width="19" height="17" viewBox="0 0 19 17"><path d="M9 1H19M9 5H19M9 9H19M0 13H19M0 16H19" stroke="#666" stroke-width="1.2"/><path d="M0 7H6M3.5 4L6.5 7L3.5 10" stroke="#2e6fbd" stroke-width="1.8" fill="none"/></svg><div style="position:absolute;left:1277px;top:143px;width:1px;height:22px;background:#d5d5d5"></div><svg style="position:absolute;left:1285px;top:145px;" width="20" height="18" viewBox="0 0 20 18"><text x="1" y="12" font-family="Liberation Sans" font-size="10" fill="#666" transform="rotate(-45 7 9)">ab</text><path d="M6 17L18 5M14 5H18V9" stroke="#666" stroke-width="1.2" fill="none"/></svg><svg style="position:absolute;left:1309px;top:151px;" width="7" height="5" viewBox="0 0 7 5"><path d="M0 0H7L3.5 4Z" fill="#666"/></svg><div style="position:absolute;left:1243.00px;top:175.00px;white-space:pre;font-family:'Liberation Sans', sans-serif;font-size:13px;line-height:13px;font-weight:normal;color:#555;transform:scaleX(1.0035);transform-origin:0.00px 0;">Alignment</div><svg style="position:absolute;left:1333px;top:179px;" width="9" height="9" viewBox="0 0 9 9"><path d="M0.5 0.5H8.5V8.5H0.5Z" stroke="#888" stroke-width="0.8" fill="none"/><path d="M3 3L7.5 7.5M7.5 4.5V7.5H4.5" stroke="#666" stroke-width="1" fill="none"/></svg><div style="position:absolute;left:1351px;top:85px;width:91px;height:27px;background:#fff;border:1px solid #c6c6c6;box-sizing:border-box"></div><div style="position:absolute;left:1354.00px;top:91.95px;white-space:pre;font-family:'Liberation Sans', sans-serif;font-size:14px;line-height:14px;font-weight:normal;color:#333;transform:scaleX(1.0228);transform-origin:0.70px 0;">General</div><svg style="position:absolute;left:1430px;top:96px;" width="7" height="5" viewBox="0 0 7 5"><path d="M0 0H7L3.5 4Z" fill="#555"/></svg><div style="position:absolute;left:1358.20px;top:116.42px;white-space:pre;font-family:'Liberation Sans', sans-serif;font-size:19px;line-height:19px;font-weight:normal;color:#444;transform:scaleX(1.0297);transform-origin:0.20px 0;">$</div><svg style="position:absolute;left:1379px;top:123px;" width="7" height="5" viewBox="0 0 7 5"><path d="M0 0H7L3.5 4Z" fill="#666"/></svg><div style="position:absolute;left:1394.40px;top:118.41px;white-space:pre;font-family:'Liberation Sans', sans-serif;font-size:17px;line-height:17px;font-weight:normal;color:#444;transform:scaleX(1.0714);transform-origin:0.60px 0;">%</div><div style="position:absolute;left:1423.90px;top:112.61px;white-space:pre;font-family:'Liberation Sans', sans-serif;font-size:17px;line-height:17px;font-weight:bold;color:#444;transform:scaleX(2.0000);transform-origin:1.10px 0;">,</div><svg style="position:absolute;left:1356px;top:146px;" width="16" height="17" viewBox="0 0 16 17"><path d="M6 4H1M3.5 1.5L1 4L3.5 6.5" stroke="#2e6fbd" stroke-width="1.5" fill="none"/><text x="8" y="8" font-family="Liberation Sans" font-size="8" fill="#444">0</text><text x="1" y="16" font-family="Liberation Sans" font-size="8" fill="#444">.00</text></svg><svg style="position:absolute;left:1382px;top:146px;" width="16" height="17" viewBox="0 0 16 17"><text x="3" y="8" font-family="Liberation Sans" font-size="8" fill="#444">.00</text><path d="M1 13H7M4.5 10.5L7 13L4.5 15.5" stroke="#2e6fbd" stroke-width="1.5" fill="none"/><text x="8" y="16" font-family="Liberation Sans" font-size="8" fill="#444">.0</text></svg><div style="position:absolute;left:1362.00px;top:175.00px;white-space:pre;font-family:'Liberation Sans', sans-serif;font-size:13px;line-height:13px;font-weight:normal;color:#555;transform:scaleX(1.0554);transform-origin:1.00px 0;">Number</div><svg style="position:absolute;left:1432px;top:179px;" width="9" height="9" viewBox="0 0 9 9"><path d="M0.5 0.5H8.5V8.5H0.5Z" stroke="#888" stroke-width="0.8" fill="none"/><path d="M3 3L7.5 7.5M7.5 4.5V7.5H4.5" stroke="#666" stroke-width="1" fill="none"/></svg><svg style="position:absolute;left:1454px;top:87px;" width="19" height="20" viewBox="0 0 19 20"><rect x="0.5" y="0.5" width="15" height="15" fill="#fff" stroke="#777" stroke-width="1"/><path d="M0.5 5.5H15.5M0.5 10.5H15.5M5.5 0.5V15.5" stroke="#aaa" stroke-width="1"/><rect x="1" y="1" width="4.5" height="4.5" fill="#e0542e"/><rect x="1" y="6" width="9" height="4.5" fill="#2e6fbd"/><rect x="1" y="11" width="4.5" height="4.5" fill="#e0542e"/><rect x="9" y="11" width="9.5" height="8.5" fill="#fff" stroke="#555" stroke-width="1"/><path d="M11 14H17M11 17H17M15 12.5L13 18.5" stroke="#555" stroke-width="0.9"/></svg><div style="position:absolute;left:1476.30px;top:92.15px;white-space:pre;font-family:'Liberation Sans', sans-serif;font-size:14px;line-height:14px;font-weight:normal;color:#444;transform:scaleX(1.0983);transform-origin:0.70px 0;">Conditional Formatting</div><svg style="position:absolute;left:1635px;top:96px;" width="7" height="5" viewBox="0 0 7 5"><path d="M0 0H7L3.5 4Z" fill="#666"/></svg><svg style="position:absolute;left:1454px;top:116px;" width="19" height="19" viewBox="0 0 19 19"><rect x="0.5" y="0.5" width="16" height="13" fill="#fff" stroke="#777" stroke-width="1"/><path d="M0.5 4.5H16.5M0.5 8.5H16.5M5.5 0.5V13.5M10.5 0.5V13.5" stroke="#aaa" stroke-width="1"/><rect x="1" y="1" width="15" height="3.5" fill="#c6d9f0"/><path d="M9 17L17 6L19 8L11 18Z" fill="#555"/><path d="M7 18C7 15 9 14 10.5 15.5Z" fill="#2e6fbd"/></svg><div style="position:absolute;left:1475.90px;top:118.95px;white-space:pre;font-family:'Liberation Sans', sans-serif;font-size:14px;line-height:14px;font-weight:normal;color:#444;transform:scaleX(1.0467);transform-origin:1.10px 0;">Format as Table</div><svg style="position:absolute;left:1585px;top:123px;" width="7" height="5" viewBox="0 0 7 5"><path d="M0 0H7L3.5 4Z" fill="#666"/></svg><svg style="position:absolute;left:1454px;top:142px;" width="19" height="19" viewBox="0 0 19 19"><rect x="0.5" y="0.5" width="16" height="13" fill="#fff" stroke="#777" stroke-width="1"/><rect x="3" y="3" width="11" height="7" fill="#c6d9f0"/><path d="M9 17L17 6L19 8L11 18Z" fill="#555"/><path d="M7 18C7 15 9 14 10.5 15.5Z" fill="#2e6fbd"/></svg><div style="position:absolute;left:1476.30px;top:145.65px;white-space:pre;font-family:'Liberation Sans', sans-serif;font-size:14px;line-height:14px;font-weight:normal;color:#444;transform:scaleX(1.0277);transform-origin:0.70px 0;">Cell Styles</div><svg style="position:absolute;left:1548px;top:150px;" width="7" height="5" viewBox="0 0 7 5"><path d="M0 0H7L3.5 4Z" fill="#666"/></svg><div style="position:absolute;left:1532.50px;top:176.00px;white-space:pre;font-family:'Liberation Sans', sans-serif;font-size:13px;line-height:13px;font-weight:normal;color:#555;transform:scaleX(0.9449);transform-origin:0.50px 0;">Styles</div><svg style="position:absolute;left:1660px;top:87px;" width="19" height="20" viewBox="0 0 19 20"><rect x="0.5" y="9.5" width="17" height="9" fill="#fff" stroke="#777" stroke-width="1"/><path d="M0.5 14H17.5M6 9.5V18.5M12 9.5V18.5M0.5 0.5H17.5V5H0.5Z" stroke="#777" stroke-width="1" fill="none"/><path d="M2 7H10M5 5L2 7L5 9" stroke="#2e6fbd" stroke-width="1.4" fill="none"/><rect x="10" y="5" width="8" height="4" fill="#2e6fbd"/></svg><div style="position:absolute;left:1681.80px;top:92.15px;white-space:pre;font-family:'Liberation Sans', sans-serif;font-size:14px;line-height:14px;font-weight:normal;color:#444;transform:scaleX(1.0386);transform-origin:1.20px 0;">Insert</div><svg style="position:absolute;left:1728px;top:96px;" width="7" height="5" viewBox="0 0 7 5"><path d="M0 0H7L3.5 4Z" fill="#666"/></svg><svg style="position:absolute;left:1660px;top:115px;" width="21" height="19" viewBox="0 0 21 19"><rect x="0.5" y="8.5" width="17" height="9" fill="#fff" stroke="#777" stroke-width="1"/><path d="M0.5 13H17.5M6 8.5V17.5M0.5 0.5H9V5H0.5Z" stroke="#777" stroke-width="1" fill="none"/><path d="M11 2L20 11M20 2L11 11" stroke="#e0542e" stroke-width="2"/></svg><div style="position:absolute;left:1681.90px;top:118.95px;white-space:pre;font-family:'Liberation Sans', sans-serif;font-size:14px;line-height:14px;font-weight:normal;color:#444;transform:scaleX(1.1211);transform-origin:1.10px 0;">Delete</div><svg style="position:absolute;left:1737px;top:123px;" width="7" height="5" viewBox="0 0 7 5"><path d="M0 0H7L3.5 4Z" fill="#666"/></svg><svg style="position:absolute;left:1660px;top:140px;" width="19" height="21" viewBox="0 0 19 21"><path d="M1 1V4M17 1V4M1 2.5H17" stroke="#2e6fbd" stroke-width="1"/><rect x="0.5" y="5.5" width="17" height="13" fill="#fff" stroke="#777" stroke-width="1"/><path d="M0.5 10H17.5M0.5 14.5H17.5M6 5.5V18.5M12 5.5V18.5" stroke="#aaa" stroke-width="1"/><rect x="6" y="10" width="6" height="4.5" fill="#2e6fbd"/></svg><div style="position:absolute;left:1681.90px;top:145.65px;white-space:pre;font-family:'Liberation Sans', sans-serif;font-size:14px;line-height:14px;font-weight:normal;color:#444;transform:scaleX(1.0789);transform-origin:1.10px 0;">Format</div><svg style="position:absolute;left:1734px;top:150px;" width="7" height="5" viewBox="0 0 7 5"><path d="M0 0H7L3.5 4Z" fill="#666"/></svg><div style="position:absolute;left:1688.40px;top:176.00px;white-space:pre;font-family:'Liberation Sans', sans-serif;font-size:13px;line-height:13px;font-weight:normal;color:#555;transform:scaleX(0.9498);transform-origin:0.60px 0;">Cells</div><div style="position:absolute;left:1761.00px;top:88.52px;white-space:pre;font-family:'Liberation Sans', sans-serif;font-size:19px;line-height:19px;font-weight:normal;color:#444;transform:scaleX(1.4500);transform-origin:1.00px 0;">Σ</div><svg style="position:absolute;left:1785px;top:96px;" width="7" height="5" viewBox="0 0 7 5"><path d="M0 0H7L3.5 4Z" fill="#666"/></svg><svg style="position:absolute;left:1800px;top:88px;" width="18" height="17" viewBox="0 0 18 17"><text x="0" y="7" font-family="Liberation Sans" font-size="8" fill="#2e6fbd">A</text><text x="0" y="16" font-family="Liberation Sans" font-size="8" fill="#8a4fbd">Z</text><path d="M7 2H17L13.5 7V12L10.5 11V7Z" fill="#555"/></svg><svg style="position:absolute;left:1824px;top:96px;" width="7" height="5" viewBox="0 0 7 5"><path d="M0 0H7L3.5 4Z" fill="#666"/></svg><svg style="position:absolute;left:1761px;top:115px;" width="18" height="18" viewBox="0 0 18 18"><rect x="0.6" y="0.6" width="16" height="16.5" fill="#fff" stroke="#555" stroke-width="1.2"/><rect x="0.6" y="0.6" width="16" height="3" fill="#555"/><path d="M8.6 5V14M5 10.5L8.6 14L12.2 10.5" stroke="#2e6fbd" stroke-width="2" fill="none"/></svg><svg style="position:absolute;left:1784px;top:123px;" width="7" height="5" viewBox="0 0 7 5"><path d="M0 0H7L3.5 4Z" fill="#666"/></svg><svg style="position:absolute;left:1800px;top:115px;" width="19" height="18" viewBox="0 0 19 18"><circle cx="11.5" cy="7" r="5.8" stroke="#2e6fbd" stroke-width="2" fill="none"/><path d="M7.5 11L1 17.5" stroke="#2e6fbd" stroke-width="2.4"/></svg><svg style="position:absolute;left:1824px;top:123px;" width="7" height="5" viewBox="0 0 7 5"><path d="M0 0H7L3.5 4Z" fill="#666"/></svg><svg style="position:absolute;left:1761px;top:142px;" width="18" height="18" viewBox="0 0 18 18"><path d="M9 1L17 8L10 14H5L1 10Z" fill="#e9738b"/><path d="M1 10L5 14H10" stroke="#c24a62" stroke-width="1" fill="none"/><path d="M4 17H17" stroke="#777" stroke-width="1"/></svg><svg style="position:absolute;left:1784px;top:150px;" width="7" height="5" viewBox="0 0 7 5"><path d="M0 0H7L3.5 4Z" fill="#666"/></svg><div style="position:absolute;left:1775.50px;top:176.00px;white-space:pre;font-family:'Liberation Sans', sans-serif;font-size:13px;line-height:13px;font-weight:normal;color:#555;transform:scaleX(1.0422);transform-origin:1.00px 0;">Editing</div><svg style="position:absolute;left:1865px;top:178px;" width="12" height="8" viewBox="0 0 12 8"><path d="M1.5 6.5L6 2L10.5 6.5" stroke="#6a6a6a" stroke-width="2" fill="none"/></svg><div style="position:absolute;left:889px;top:205px;width:127px;height:30px;background:#fff;border:1px solid #d6d6d6;box-sizing:border-box"></div><div style="position:absolute;left:894.90px;top:214.15px;white-space:pre;font-family:'Liberation Sans', sans-serif;font-size:14px;line-height:14px;font-weight:normal;color:#222;transform:scaleX(1.1379);transform-origin:1.10px 0;">K28</div><svg style="position:absolute;left:999px;top:218px;" width="9" height="6" viewBox="0 0 9 6"><path d="M0 0H9L4.5 5Z" fill="#666"/></svg><svg style="position:absolute;left:1032px;top:212px;" width="4" height="16" viewBox="0 0 4 16"><circle cx="2" cy="2" r="1.5" fill="#999"/><circle cx="2" cy="8" r="1.5" fill="#999"/><circle cx="2" cy="14" r="1.5" fill="#999"/></svg><div style="position:absolute;left:1053px;top:205px;width:137px;height:30px;background:#fff;border:1px solid #d6d6d6;box-sizing:border-box"></div><svg style="position:absolute;left:1067px;top:214px;" width="17" height="13" viewBox="0 0 17 13"><path d="M1.5 1L15.5 12M15.5 1L1.5 12" stroke="#a9a9a9" stroke-width="1.8"/></svg><svg style="position:absolute;left:1112px;top:214px;" width="18" height="13" viewBox="0 0 18 13"><path d="M1 7L6 12L17 1" stroke="#b4b4b4" stroke-width="2.4" fill="none"/></svg><div style="position:absolute;left:1156.50px;top:211.09px;white-space:pre;font-family:'Liberation Serif', serif;font-size:19px;line-height:19px;font-weight:normal;color:#555;transform:scaleX(1.0596);transform-origin:0.50px 0;font-style:italic;">fx</div><div style="position:absolute;left:1193px;top:205px;width:688px;height:30px;background:#fff;border:1px solid #d6d6d6;box-sizing:border-box"></div><svg style="position:absolute;left:1864px;top:216px;" width="12" height="8" viewBox="0 0 12 8"><path d="M1.5 1.5L6 6L10.5 1.5" stroke="#6a6a6a" stroke-width="2.4" fill="none"/></svg><div style="position:absolute;left:883px;top:247px;width:978px;height:20px;background:#e6e6e6"></div><svg style="position:absolute;left:896px;top:250px;" width="16" height="15" viewBox="0 0 16 15"><path d="M15 0V14H1Z" fill="#b4b4b4"/></svg><div style="position:absolute;left:912px;top:247px;width:1px;height:20px;background:#c8c8c8"></div><div style="position:absolute;left:935px;top:247px;width:1px;height:20px;background:#c8c8c8"></div><div style="position:absolute;left:1244px;top:247px;width:1px;height:20px;background:#c8c8c8"></div><div style="position:absolute;left:1309px;top:247px;width:1px;height:20px;background:#c8c8c8"></div><div style="position:absolute;left:1423px;top:247px;width:1px;height:20px;background:#c8c8c8"></div><div style="position:absolute;left:1568px;top:247px;width:1px;height:20px;background:#c8c8c8"></div><div style="position:absolute;left:1699px;top:247px;width:1px;height:20px;background:#c8c8c8"></div><div style="position:absolute;left:1825px;top:247px;width:1px;height:20px;background:#c8c8c8"></div><div style="position:absolute;left:1861px;top:247px;width:1px;height:20px;background:#c8c8c8"></div><div style="position:absolute;left:918.80px;top:251.15px;white-space:pre;font-family:'Liberation Sans', sans-serif;font-size:14px;line-height:14px;font-weight:normal;color:#222;">A</div><div style="position:absolute;left:1084.65px;top:251.15px;white-space:pre;font-family:'Liberation Sans', sans-serif;font-size:14px;line-height:14px;font-weight:normal;color:#222;">B</div><div style="position:absolute;left:1271.35px;top:251.15px;white-space:pre;font-family:'Liberation Sans', sans-serif;font-size:14px;line-height:14px;font-weight:normal;color:#222;">C</div><div style="position:absolute;left:1360.70px;top:251.15px;white-space:pre;font-family:'Liberation Sans', sans-serif;font-size:14px;line-height:14px;font-weight:normal;color:#222;">D</div><div style="position:absolute;left:1490.55px;top:251.15px;white-space:pre;font-family:'Liberation Sans', sans-serif;font-size:14px;line-height:14px;font-weight:normal;color:#222;">E</div><div style="position:absolute;left:1628.95px;top:251.15px;white-space:pre;font-family:'Liberation Sans', sans-serif;font-size:14px;line-height:14px;font-weight:normal;color:#222;">F</div><div style="position:absolute;left:1756.70px;top:251.15px;white-space:pre;font-family:'Liberation Sans', sans-serif;font-size:14px;line-height:14px;font-weight:normal;color:#222;">G</div><div style="position:absolute;left:1856.95px;top:251.15px;white-space:pre;font-family:'Liberation Sans', sans-serif;font-size:14px;line-height:14px;font-weight:normal;color:#222;">H</div><div style="position:absolute;left:883px;top:267px;width:29px;height:693px;background:#e6e6e6"></div><div style="position:absolute;left:885.30px;top:272.55px;white-space:pre;font-family:'Liberation Sans', sans-serif;font-size:14px;line-height:14px;font-weight:normal;color:#222;transform:scaleX(1.0769);transform-origin:0.70px 0;">226</div><div style="position:absolute;left:883px;top:289px;width:29px;height:1px;background:#cfcfcf"></div><div style="position:absolute;left:885.30px;top:294.55px;white-space:pre;font-family:'Liberation Sans', sans-serif;font-size:14px;line-height:14px;font-weight:normal;color:#222;transform:scaleX(1.0818);transform-origin:0.70px 0;">227</div><div style="position:absolute;left:883px;top:311px;width:29px;height:1px;background:#cfcfcf"></div><div style="position:absolute;left:885.30px;top:316.55px;white-space:pre;font-family:'Liberation Sans', sans-serif;font-size:14px;line-height:14px;font-weight:normal;color:#222;transform:scaleX(1.0769);transform-origin:0.70px 0;">228</div><div style="position:absolute;left:883px;top:333px;width:29px;height:1px;background:#cfcfcf"></div><div style="position:absolute;left:885.30px;top:338.55px;white-space:pre;font-family:'Liberation Sans', sans-serif;font-size:14px;line-height:14px;font-weight:normal;color:#222;transform:scaleX(1.0769);transform-origin:0.70px 0;">229</div><div style="position:absolute;left:883px;top:355px;width:29px;height:1px;background:#cfcfcf"></div><div style="position:absolute;left:885.30px;top:360.55px;white-space:pre;font-family:'Liberation Sans', sans-serif;font-size:14px;line-height:14px;font-weight:normal;color:#222;transform:scaleX(1.0721);transform-origin:0.70px 0;">230</div><div style="position:absolute;left:883px;top:377px;width:29px;height:1px;background:#cfcfcf"></div><div style="position:absolute;left:885.30px;top:382.55px;white-space:pre;font-family:'Liberation Sans', sans-serif;font-size:14px;line-height:14px;font-weight:normal;color:#222;transform:scaleX(1.0769);transform-origin:0.70px 0;">231</div><div style="position:absolute;left:883px;top:399px;width:29px;height:1px;background:#cfcfcf"></div><div style="position:absolute;left:885.30px;top:404.55px;white-space:pre;font-family:'Liberation Sans', sans-serif;font-size:14px;line-height:14px;font-weight:normal;color:#222;transform:scaleX(1.0818);transform-origin:0.70px 0;">232</div><div style="position:absolute;left:883px;top:421px;width:29px;height:1px;background:#cfcfcf"></div><div style="position:absolute;left:885.30px;top:462.55px;white-space:pre;font-family:'Liberation Sans', sans-serif;font-size:14px;line-height:14px;font-weight:normal;color:#222;transform:scaleX(1.0769);transform-origin:0.70px 0;">233</div><div style="position:absolute;left:883px;top:479px;width:29px;height:1px;background:#cfcfcf"></div><div style="position:absolute;left:885.30px;top:484.55px;white-space:pre;font-family:'Liberation Sans', sans-serif;font-size:14px;line-height:14px;font-weight:normal;color:#222;transform:scaleX(1.0673);transform-origin:0.70px 0;">234</div><div style="position:absolute;left:883px;top:501px;width:29px;height:1px;background:#cfcfcf"></div><div style="position:absolute;left:885.30px;top:506.55px;white-space:pre;font-family:'Liberation Sans', sans-serif;font-size:14px;line-height:14px;font-weight:normal;color:#222;transform:scaleX(1.0769);transform-origin:0.70px 0;">235</div><div style="position:absolute;left:883px;top:523px;width:29px;height:1px;background:#cfcfcf"></div><div style="position:absolute;left:885.30px;top:549.55px;white-space:pre;font-family:'Liberation Sans', sans-serif;font-size:14px;line-height:14px;font-weight:normal;color:#222;transform:scaleX(1.0769);transform-origin:0.70px 0;">236</div><div style="position:absolute;left:883px;top:566px;width:29px;height:1px;background:#cfcfcf"></div><div style="position:absolute;left:885.30px;top:570.55px;white-space:pre;font-family:'Liberation Sans', sans-serif;font-size:14px;line-height:14px;font-weight:normal;color:#222;transform:scaleX(1.0818);transform-origin:0.70px 0;">237</div><div style="position:absolute;left:883px;top:587px;width:29px;height:1px;background:#cfcfcf"></div><div style="position:absolute;left:885.30px;top:592.55px;white-space:pre;font-family:'Liberation Sans', sans-serif;font-size:14px;line-height:14px;font-weight:normal;color:#222;transform:scaleX(1.0769);transform-origin:0.70px 0;">238</div><div style="position:absolute;left:883px;top:609px;width:29px;height:1px;background:#cfcfcf"></div><div style="position:absolute;left:885.30px;top:614.55px;white-space:pre;font-family:'Liberation Sans', sans-serif;font-size:14px;line-height:14px;font-weight:normal;color:#222;transform:scaleX(1.0769);transform-origin:0.70px 0;">239</div><div style="position:absolute;left:883px;top:631px;width:29px;height:1px;background:#cfcfcf"></div><div style="position:absolute;left:885.30px;top:635.55px;white-space:pre;font-family:'Liberation Sans', sans-serif;font-size:14px;line-height:14px;font-weight:normal;color:#222;transform:scaleX(1.0721);transform-origin:0.70px 0;">240</div><div style="position:absolute;left:883px;top:652px;width:29px;height:1px;background:#cfcfcf"></div><div style="position:absolute;left:885.30px;top:657.55px;white-space:pre;font-family:'Liberation Sans', sans-serif;font-size:14px;line-height:14px;font-weight:normal;color:#222;transform:scaleX(1.0769);transform-origin:0.70px 0;">241</div><div style="position:absolute;left:883px;top:674px;width:29px;height:1px;background:#cfcfcf"></div><div style="position:absolute;left:885.30px;top:679.55px;white-space:pre;font-family:'Liberation Sans', sans-serif;font-size:14px;line-height:14px;font-weight:normal;color:#222;transform:scaleX(1.0818);transform-origin:0.70px 0;">242</div><div style="position:absolute;left:883px;top:696px;width:29px;height:1px;background:#cfcfcf"></div><div style="position:absolute;left:885.30px;top:700.55px;white-space:pre;font-family:'Liberation Sans', sans-serif;font-size:14px;line-height:14px;font-weight:normal;color:#222;transform:scaleX(1.0769);transform-origin:0.70px 0;">243</div><div style="position:absolute;left:883px;top:717px;width:29px;height:1px;background:#cfcfcf"></div><div style="position:absolute;left:885.30px;top:722.55px;white-space:pre;font-family:'Liberation Sans', sans-serif;font-size:14px;line-height:14px;font-weight:normal;color:#222;transform:scaleX(1.0673);transform-origin:0.70px 0;">244</div><div style="position:absolute;left:883px;top:739px;width:29px;height:1px;background:#cfcfcf"></div><div style="position:absolute;left:885.30px;top:743.55px;white-space:pre;font-family:'Liberation Sans', sans-serif;font-size:14px;line-height:14px;font-weight:normal;color:#222;transform:scaleX(1.0769);transform-origin:0.70px 0;">245</div><div style="position:absolute;left:883px;top:760px;width:29px;height:1px;background:#cfcfcf"></div><div style="position:absolute;left:885.30px;top:765.55px;white-space:pre;font-family:'Liberation Sans', sans-serif;font-size:14px;line-height:14px;font-weight:normal;color:#222;transform:scaleX(1.0769);transform-origin:0.70px 0;">246</div><div style="position:absolute;left:883px;top:782px;width:29px;height:1px;background:#cfcfcf"></div><div style="position:absolute;left:885.30px;top:787.55px;white-space:pre;font-family:'Liberation Sans', sans-serif;font-size:14px;line-height:14px;font-weight:normal;color:#222;transform:scaleX(1.0818);transform-origin:0.70px 0;">247</div><div style="position:absolute;left:883px;top:804px;width:29px;height:1px;background:#cfcfcf"></div><div style="position:absolute;left:885.30px;top:809.55px;white-space:pre;font-family:'Liberation Sans', sans-serif;font-size:14px;line-height:14px;font-weight:normal;color:#222;transform:scaleX(1.0769);transform-origin:0.70px 0;">248</div><div style="position:absolute;left:883px;top:826px;width:29px;height:1px;background:#cfcfcf"></div><div style="position:absolute;left:885.30px;top:831.55px;white-space:pre;font-family:'Liberation Sans', sans-serif;font-size:14px;line-height:14px;font-weight:normal;color:#222;transform:scaleX(1.0769);transform-origin:0.70px 0;">249</div><div style="position:absolute;left:883px;top:848px;width:29px;height:1px;background:#cfcfcf"></div><div style="position:absolute;left:885.30px;top:853.55px;white-space:pre;font-family:'Liberation Sans', sans-serif;font-size:14px;line-height:14px;font-weight:normal;color:#222;transform:scaleX(1.0721);transform-origin:0.70px 0;">250</div><div style="position:absolute;left:883px;top:870px;width:29px;height:1px;background:#cfcfcf"></div><div style="position:absolute;left:885.30px;top:875.55px;white-space:pre;font-family:'Liberation Sans', sans-serif;font-size:14px;line-height:14px;font-weight:normal;color:#222;transform:scaleX(1.0769);transform-origin:0.70px 0;">251</div><div style="position:absolute;left:883px;top:892px;width:29px;height:1px;background:#cfcfcf"></div><div style="position:absolute;left:885.30px;top:897.55px;white-space:pre;font-family:'Liberation Sans', sans-serif;font-size:14px;line-height:14px;font-weight:normal;color:#222;transform:scaleX(1.0818);transform-origin:0.70px 0;">252</div><div style="position:absolute;left:883px;top:914px;width:29px;height:1px;background:#cfcfcf"></div><div style="position:absolute;left:883px;top:914px;width:29px;height:10px;overflow:hidden"><div style="position:absolute;left:2.30px;top:-0.85px;white-space:pre;font-family:'Liberation Sans', sans-serif;font-size:14px;line-height:14px;font-weight:normal;color:#222;transform:scaleX(1.0769);transform-origin:0.70px 0;">253</div></div><div style="position:absolute;left:883px;top:924px;width:29px;height:1px;background:#cfcfcf"></div><div style="position:absolute;left:883px;top:924px;width:29px;height:10px;overflow:hidden"><div style="position:absolute;left:2.30px;top:-0.85px;white-space:pre;font-family:'Liberation Sans', sans-serif;font-size:14px;line-height:14px;font-weight:normal;color:#222;transform:scaleX(1.0673);transform-origin:0.70px 0;">254</div></div><div style="position:absolute;left:883px;top:934px;width:29px;height:1px;background:#cfcfcf"></div><div style="position:absolute;left:885.30px;top:939.55px;white-space:pre;font-family:'Liberation Sans', sans-serif;font-size:14px;line-height:14px;font-weight:normal;color:#222;transform:scaleX(1.0769);transform-origin:0.70px 0;">255</div><div style="position:absolute;left:883px;top:956px;width:29px;height:1px;background:#cfcfcf"></div><div style="position:absolute;left:912px;top:267px;width:1px;height:693px;background:#c4c4c4"></div><div style="position:absolute;left:912px;top:267px;width:949px;height:693px;overflow:hidden;background:#fff"><div style="position:absolute;left:-912px;top:-267px;width:1920px;height:1080px;"><div style="position:absolute;left:1825px;top:289px;width:36px;height:1px;background:#d9d9d9"></div><div style="position:absolute;left:1825px;top:311px;width:36px;height:1px;background:#d9d9d9"></div><div style="position:absolute;left:1825px;top:333px;width:36px;height:1px;background:#d9d9d9"></div><div style="position:absolute;left:1825px;top:355px;width:36px;height:1px;background:#d9d9d9"></div><div style="position:absolute;left:1825px;top:377px;width:36px;height:1px;background:#d9d9d9"></div><div style="position:absolute;left:1825px;top:399px;width:36px;height:1px;background:#d9d9d9"></div><div style="position:absolute;left:1825px;top:421px;width:36px;height:1px;background:#d9d9d9"></div><div style="position:absolute;left:1825px;top:479px;width:36px;height:1px;background:#d9d9d9"></div><div style="position:absolute;left:1825px;top:501px;width:36px;height:1px;background:#d9d9d9"></div><div style="position:absolute;left:1825px;top:523px;width:36px;height:1px;background:#d9d9d9"></div><div style="position:absolute;left:1825px;top:566px;width:36px;height:1px;background:#d9d9d9"></div><div style="position:absolute;left:1825px;top:587px;width:36px;height:1px;background:#d9d9d9"></div><div style="position:absolute;left:1825px;top:609px;width:36px;height:1px;background:#d9d9d9"></div><div style="position:absolute;left:1825px;top:631px;width:36px;height:1px;background:#d9d9d9"></div><div style="position:absolute;left:1825px;top:652px;width:36px;height:1px;background:#d9d9d9"></div><div style="position:absolute;left:1825px;top:674px;width:36px;height:1px;background:#d9d9d9"></div><div style="position:absolute;left:1825px;top:696px;width:36px;height:1px;background:#d9d9d9"></div><div style="position:absolute;left:1825px;top:717px;width:36px;height:1px;background:#d9d9d9"></div><div style="position:absolute;left:1825px;top:739px;width:36px;height:1px;background:#d9d9d9"></div><div style="position:absolute;left:1825px;top:760px;width:36px;height:1px;background:#d9d9d9"></div><div style="position:absolute;left:1825px;top:782px;width:36px;height:1px;background:#d9d9d9"></div><div style="position:absolute;left:1825px;top:804px;width:36px;height:1px;background:#d9d9d9"></div><div style="position:absolute;left:1825px;top:826px;width:36px;height:1px;background:#d9d9d9"></div><div style="position:absolute;left:1825px;top:848px;width:36px;height:1px;background:#d9d9d9"></div><div style="position:absolute;left:1825px;top:870px;width:36px;height:1px;background:#d9d9d9"></div><div style="position:absolute;left:1825px;top:892px;width:36px;height:1px;background:#d9d9d9"></div><div style="position:absolute;left:1825px;top:914px;width:36px;height:1px;background:#d9d9d9"></div><div style="position:absolute;left:1825px;top:924px;width:36px;height:1px;background:#d9d9d9"></div><div style="position:absolute;left:1825px;top:934px;width:36px;height:1px;background:#d9d9d9"></div><div style="position:absolute;left:1825px;top:956px;width:36px;height:1px;background:#d9d9d9"></div><div style="position:absolute;left:1825px;top:980px;width:36px;height:1px;background:#d9d9d9"></div><div style="position:absolute;left:1861px;top:267px;width:1px;height:693px;background:#d9d9d9"></div><div style="position:absolute;left:935px;top:333px;width:890px;height:1px;background:#d9d9d9"></div><div style="position:absolute;left:935px;top:311px;width:1px;height:22px;background:#d9d9d9"></div><div style="position:absolute;left:935px;top:924px;width:890px;height:1px;background:#d9d9d9"></div><div style="position:absolute;left:935px;top:914px;width:1px;height:10px;background:#d9d9d9"></div><div style="position:absolute;left:912px;top:355px;width:913px;height:1px;background:#d9d9d9"></div><div style="position:absolute;left:912px;top:934px;width:913px;height:1px;background:#d9d9d9"></div><div style="position:absolute;left:935px;top:289px;width:890px;height:22px;background:#4f81bd"></div><svg style="position:absolute;left:935px;top:355px;shape-rendering:crispEdges" width="890" height="22" viewBox="0 0 890 22"><defs><pattern id="dp230" width="2" height="4" patternUnits="userSpaceOnUse"><rect x="0" y="0" width="1" height="1" fill="#6495e0"/><rect x="1" y="2" width="1" height="1" fill="#6495e0"/></pattern></defs><rect width="890" height="22" fill="#fff"/><rect width="890" height="22" fill="url(#dp230)"/></svg><div style="position:absolute;left:935px;top:377px;width:890px;height:22px;background:#c0c0c0"></div><div style="position:absolute;left:935px;top:399px;width:890px;height:22px;background:#c0c0c0"></div><div style="position:absolute;left:935px;top:421px;width:890px;height:58px;background:repeating-conic-gradient(#1e9e5a 0 25%,#a9dcbf 0 50%) 0 0/2px 2px;"></div><div style="position:absolute;left:935px;top:479px;width:890px;height:22px;background:#4f81bd"></div><div style="position:absolute;left:935px;top:587px;width:890px;height:22px;background:#c0c0c0"></div><div style="position:absolute;left:935px;top:652px;width:890px;height:22px;background:#c0c0c0"></div><div style="position:absolute;left:935px;top:739px;width:890px;height:21px;background:#c0c0c0"></div><div style="position:absolute;left:935px;top:892px;width:890px;height:22px;background:#4f81bd"></div><svg style="position:absolute;left:935px;top:934px;shape-rendering:crispEdges" width="890" height="22" viewBox="0 0 890 22"><defs><pattern id="dp255" width="2" height="4" patternUnits="userSpaceOnUse"><rect x="0" y="0" width="1" height="1" fill="#6495e0"/><rect x="1" y="2" width="1" height="1" fill="#6495e0"/></pattern></defs><rect width="890" height="22" fill="#fff"/><rect width="890" height="22" fill="url(#dp255)"/></svg><div style="position:absolute;left:935px;top:956px;width:890px;height:24px;background:#c0c0c0"></div><div style="position:absolute;left:935px;top:289px;width:891px;height:1px;background:#000"></div><div style="position:absolute;left:935px;top:311px;width:891px;height:1px;background:#000"></div><div style="position:absolute;left:935px;top:355px;width:891px;height:1px;background:#000"></div><div style="position:absolute;left:935px;top:377px;width:891px;height:1px;background:#000"></div><div style="position:absolute;left:935px;top:399px;width:891px;height:1px;background:#000"></div><div style="position:absolute;left:935px;top:421px;width:891px;height:1px;background:#000"></div><div style="position:absolute;left:935px;top:479px;width:891px;height:1px;background:#000"></div><div style="position:absolute;left:935px;top:501px;width:891px;height:1px;background:#000"></div><div style="position:absolute;left:935px;top:523px;width:891px;height:1px;background:#000"></div><div style="position:absolute;left:935px;top:566px;width:891px;height:1px;background:#000"></div><div style="position:absolute;left:935px;top:587px;width:891px;height:1px;background:#000"></div><div style="position:absolute;left:935px;top:609px;width:891px;height:1px;background:#000"></div><div style="position:absolute;left:935px;top:631px;width:891px;height:1px;background:#000"></div><div style="position:absolute;left:935px;top:652px;width:891px;height:1px;background:#000"></div><div style="position:absolute;left:935px;top:674px;width:891px;height:1px;background:#000"></div><div style="position:absolute;left:935px;top:696px;width:891px;height:1px;background:#000"></div><div style="position:absolute;left:935px;top:717px;width:891px;height:1px;background:#000"></div><div style="position:absolute;left:935px;top:739px;width:891px;height:1px;background:#000"></div><div style="position:absolute;left:935px;top:760px;width:891px;height:1px;background:#000"></div><div style="position:absolute;left:935px;top:782px;width:891px;height:1px;background:#000"></div><div style="position:absolute;left:935px;top:804px;width:891px;height:1px;background:#000"></div><div style="position:absolute;left:935px;top:826px;width:891px;height:1px;background:#000"></div><div style="position:absolute;left:935px;top:848px;width:891px;height:1px;background:#000"></div><div style="position:absolute;left:935px;top:870px;width:891px;height:1px;background:#000"></div><div style="position:absolute;left:935px;top:892px;width:891px;height:1px;background:#000"></div><div style="position:absolute;left:935px;top:914px;width:891px;height:1px;background:#000"></div><div style="position:absolute;left:935px;top:355px;width:891px;height:1px;background:#000"></div><div style="position:absolute;left:935px;top:934px;width:891px;height:1px;background:#000"></div><div style="position:absolute;left:935px;top:956px;width:891px;height:1px;background:#000"></div><div style="position:absolute;left:935px;top:267px;width:1px;height:45px;background:#000"></div><div style="position:absolute;left:1825px;top:267px;width:1px;height:45px;background:#000"></div><div style="position:absolute;left:935px;top:355px;width:1px;height:560px;background:#000"></div><div style="position:absolute;left:1825px;top:355px;width:1px;height:560px;background:#000"></div><div style="position:absolute;left:935px;top:934px;width:1px;height:47px;background:#000"></div><div style="position:absolute;left:1825px;top:934px;width:1px;height:47px;background:#000"></div><div style="position:absolute;left:1309px;top:267px;width:1px;height:23px;background:#000"></div><div style="position:absolute;left:1423px;top:267px;width:1px;height:23px;background:#000"></div><div style="position:absolute;left:1699px;top:267px;width:1px;height:23px;background:#000"></div><div style="position:absolute;left:1699px;top:289px;width:1px;height:23px;background:#000"></div><div style="position:absolute;left:1244px;top:479px;width:1px;height:23px;background:#000"></div><div style="position:absolute;left:1309px;top:479px;width:1px;height:23px;background:#000"></div><div style="position:absolute;left:1423px;top:479px;width:1px;height:23px;background:#000"></div><div style="position:absolute;left:1568px;top:479px;width:1px;height:23px;background:#000"></div><div style="position:absolute;left:1699px;top:479px;width:1px;height:23px;background:#000"></div><div style="position:absolute;left:1244px;top:523px;width:1px;height:44px;background:#000"></div><div style="position:absolute;left:1309px;top:523px;width:1px;height:44px;background:#000"></div><div style="position:absolute;left:1423px;top:523px;width:1px;height:44px;background:#000"></div><div style="position:absolute;left:1568px;top:523px;width:1px;height:44px;background:#000"></div><div style="position:absolute;left:1699px;top:523px;width:1px;height:44px;background:#000"></div><div style="position:absolute;left:1244px;top:566px;width:1px;height:22px;background:#000"></div><div style="position:absolute;left:1309px;top:566px;width:1px;height:22px;background:#000"></div><div style="position:absolute;left:1423px;top:566px;width:1px;height:22px;background:#000"></div><div style="position:absolute;left:1568px;top:566px;width:1px;height:22px;background:#000"></div><div style="position:absolute;left:1699px;top:566px;width:1px;height:22px;background:#000"></div><div style="position:absolute;left:1244px;top:631px;width:1px;height:22px;background:#000"></div><div style="position:absolute;left:1309px;top:631px;width:1px;height:22px;background:#000"></div><div style="position:absolute;left:1423px;top:631px;width:1px;height:22px;background:#000"></div><div style="position:absolute;left:1568px;top:631px;width:1px;height:22px;background:#000"></div><div style="position:absolute;left:1699px;top:631px;width:1px;height:22px;background:#000"></div><div style="position:absolute;left:1244px;top:696px;width:1px;height:22px;background:#000"></div><div style="position:absolute;left:1309px;top:696px;width:1px;height:22px;background:#000"></div><div style="position:absolute;left:1423px;top:696px;width:1px;height:22px;background:#000"></div><div style="position:absolute;left:1568px;top:696px;width:1px;height:22px;background:#000"></div><div style="position:absolute;left:1699px;top:696px;width:1px;height:22px;background:#000"></div><div style="position:absolute;left:1244px;top:717px;width:1px;height:23px;background:#000"></div><div style="position:absolute;left:1309px;top:717px;width:1px;height:23px;background:#000"></div><div style="position:absolute;left:1423px;top:717px;width:1px;height:23px;background:#000"></div><div style="position:absolute;left:1568px;top:717px;width:1px;height:23px;background:#000"></div><div style="position:absolute;left:1699px;top:717px;width:1px;height:23px;background:#000"></div><div style="position:absolute;left:1699px;top:587px;width:1px;height:23px;background:#000"></div><div style="position:absolute;left:1699px;top:652px;width:1px;height:23px;background:#000"></div><div style="position:absolute;left:1699px;top:739px;width:1px;height:22px;background:#000"></div><div style="position:absolute;left:1699px;top:848px;width:1px;height:23px;background:#000"></div><div style="position:absolute;left:1699px;top:892px;width:1px;height:23px;background:#000"></div><div style="position:absolute;left:1309px;top:782px;width:1px;height:23px;background:#000"></div><div style="position:absolute;left:1423px;top:782px;width:1px;height:23px;background:#000"></div><div style="position:absolute;left:1699px;top:782px;width:1px;height:23px;background:#000"></div><div style="position:absolute;left:1309px;top:804px;width:1px;height:23px;background:#000"></div><div style="position:absolute;left:1423px;top:804px;width:1px;height:23px;background:#000"></div><div style="position:absolute;left:1699px;top:804px;width:1px;height:23px;background:#000"></div><div style="position:absolute;left:1309px;top:826px;width:1px;height:23px;background:#000"></div><div style="position:absolute;left:1423px;top:826px;width:1px;height:23px;background:#000"></div><div style="position:absolute;left:1699px;top:826px;width:1px;height:23px;background:#000"></div><div style="position:absolute;left:1309px;top:870px;width:1px;height:23px;background:#000"></div><div style="position:absolute;left:1423px;top:870px;width:1px;height:23px;background:#000"></div><div style="position:absolute;left:1699px;top:870px;width:1px;height:23px;background:#000"></div><div style="position:absolute;left:937.90px;top:271.75px;white-space:pre;font-family:'Liberation Sans', sans-serif;font-size:16.6px;line-height:16.6px;font-weight:bold;color:#000;">ПЕЧАЛБА</div><div style="position:absolute;left:1363.70px;top:271.75px;white-space:pre;font-family:'Liberation Sans', sans-serif;font-size:16.6px;line-height:16.6px;font-weight:normal;color:#000;">10.00%</div><div style="position:absolute;left:1761.50px;top:271.75px;white-space:pre;font-family:'Liberation Sans', sans-serif;font-size:16.6px;line-height:16.6px;font-weight:normal;color:#000;">0.18 лв.</div><div style="position:absolute;left:1278.40px;top:293.95px;white-space:pre;font-family:'Liberation Sans', sans-serif;font-size:16.6px;line-height:16.6px;font-weight:bold;color:#000;transform:scaleX(1.0398);transform-origin:1.10px 0;">ВСИЧКО:</div><div style="position:absolute;left:1758.80px;top:293.55px;white-space:pre;font-family:'Liberation Sans', sans-serif;font-size:16.6px;line-height:16.6px;font-weight:bold;color:#000;">1.93 лв.</div><div style="position:absolute;left:1319.60px;top:358.95px;white-space:pre;font-family:'Liberation Sans', sans-serif;font-size:16.6px;line-height:16.6px;font-weight:bold;color:#000;transform:scaleX(0.9975);transform-origin:0.40px 0;">АНАЛИЗ  № 10</div><div style="position:absolute;left:937.90px;top:381.15px;white-space:pre;font-family:'Liberation Sans', sans-serif;font-size:16.6px;line-height:16.6px;font-weight:bold;color:#000;transform:scaleX(1.0056);transform-origin:1.10px 0;">ШИФЪР  11.261</div><div style="position:absolute;left:937.90px;top:404.95px;white-space:pre;font-family:'Liberation Sans', sans-serif;font-size:16.6px;line-height:16.6px;font-weight:bold;color:#000;transform:scaleX(0.9960);transform-origin:1.10px 0;">МЯРКА М</div><div style="position:absolute;left:1014.00px;top:400.69px;white-space:pre;font-family:'Liberation Sans', sans-serif;font-size:11px;line-height:11px;font-weight:normal;color:#000;">2</div><div style="position:absolute;left:1068.50px;top:442.05px;white-space:pre;font-family:'Liberation Sans', sans-serif;font-size:16.6px;line-height:16.6px;font-weight:bold;color:#000;transform:scaleX(1.0050);transform-origin:1.10px 0;">Изравнителна  пердашена армирана циментова  замазка 4см -при ремонти</div><div style="position:absolute;left:1029.20px;top:483.75px;white-space:pre;font-family:'Liberation Sans', sans-serif;font-size:16.6px;line-height:16.6px;font-weight:bold;color:#000;transform:scaleX(0.9958);transform-origin:1.10px 0;">наименование</div><div style="position:absolute;left:1251.90px;top:483.75px;white-space:pre;font-family:'Liberation Sans', sans-serif;font-size:16.6px;line-height:16.6px;font-weight:bold;color:#000;transform:scaleX(1.0062);transform-origin:1.10px 0;">мярка</div><div style="position:absolute;left:1471.70px;top:483.75px;white-space:pre;font-family:'Liberation Sans', sans-serif;font-size:16.6px;line-height:16.6px;font-weight:bold;color:#000;transform:scaleX(1.0586);transform-origin:1.10px 0;">коеф.</div><div style="position:absolute;left:1603.00px;top:483.75px;white-space:pre;font-family:'Liberation Sans', sans-serif;font-size:16.6px;line-height:16.6px;font-weight:bold;color:#000;transform:scaleX(0.9872);transform-origin:0.60px 0;">ед.цена</div><div style="position:absolute;left:1725.90px;top:483.75px;white-space:pre;font-family:'Liberation Sans', sans-serif;font-size:16.6px;line-height:16.6px;font-weight:bold;color:#000;transform:scaleX(0.9905);transform-origin:0.60px 0;">стойност</div><div style="position:absolute;left:1351.35px;top:483.75px;white-space:pre;font-family:'Liberation Sans', sans-serif;font-size:16.6px;line-height:16.6px;font-weight:bold;color:#000;">р.н.</div><div style="position:absolute;left:1328.50px;top:504.95px;white-space:pre;font-family:'Liberation Sans', sans-serif;font-size:16.6px;line-height:16.6px;font-weight:bold;color:#000;transform:scaleX(0.9825);transform-origin:1.10px 0;">МАТЕРИАЛИ</div><div style="position:absolute;left:938.80px;top:538.25px;white-space:pre;font-family:'Liberation Sans', sans-serif;font-size:16.6px;line-height:16.6px;font-weight:normal;color:#000;transform:scaleX(0.9997);transform-origin:0.80px 0;">Стъклотекстилна армировъчна мрежа</div><div style="position:absolute;left:1247.30px;top:538.25px;white-space:pre;font-family:'Liberation Sans', sans-serif;font-size:16.6px;line-height:16.6px;font-weight:normal;color:#000;">м</div><div style="position:absolute;left:1258.50px;top:534.19px;white-space:pre;font-family:'Liberation Sans', sans-serif;font-size:11px;line-height:11px;font-weight:normal;color:#000;">2</div><div style="position:absolute;left:1360.00px;top:538.25px;white-space:pre;font-family:'Liberation Sans', sans-serif;font-size:16.6px;line-height:16.6px;font-weight:normal;color:#000;">1.00000</div><div style="position:absolute;left:1532.50px;top:538.25px;white-space:pre;font-family:'Liberation Sans', sans-serif;font-size:16.6px;line-height:16.6px;font-weight:normal;color:#000;">1.10</div><div style="position:absolute;left:1635.90px;top:538.25px;white-space:pre;font-family:'Liberation Sans', sans-serif;font-size:16.6px;line-height:16.6px;font-weight:normal;color:#000;">1.56 лв.</div><div style="position:absolute;left:1761.50px;top:538.25px;white-space:pre;font-family:'Liberation Sans', sans-serif;font-size:16.6px;line-height:16.6px;font-weight:normal;color:#000;">1.71 лв.</div><div style="position:absolute;left:938.30px;top:569.95px;white-space:pre;font-family:'Liberation Sans', sans-serif;font-size:16.6px;line-height:16.6px;font-weight:normal;color:#000;transform:scaleX(0.9960);transform-origin:1.30px 0;">Циментова замазка</div><div style="position:absolute;left:1247.30px;top:569.95px;white-space:pre;font-family:'Liberation Sans', sans-serif;font-size:16.6px;line-height:16.6px;font-weight:normal;color:#000;">кг</div><div style="position:absolute;left:1360.00px;top:569.95px;white-space:pre;font-family:'Liberation Sans', sans-serif;font-size:16.6px;line-height:16.6px;font-weight:normal;color:#000;">1.00000</div><div style="position:absolute;left:1523.30px;top:569.95px;white-space:pre;font-family:'Liberation Sans', sans-serif;font-size:16.6px;line-height:16.6px;font-weight:normal;color:#000;">22.00</div><div style="position:absolute;left:1635.90px;top:569.95px;white-space:pre;font-family:'Liberation Sans', sans-serif;font-size:16.6px;line-height:16.6px;font-weight:normal;color:#000;">0.17 лв.</div><div style="position:absolute;left:1761.50px;top:569.95px;white-space:pre;font-family:'Liberation Sans', sans-serif;font-size:16.6px;line-height:16.6px;font-weight:normal;color:#000;">3.74 лв.</div><div style="position:absolute;left:1761.50px;top:591.75px;white-space:pre;font-family:'Liberation Sans', sans-serif;font-size:16.6px;line-height:16.6px;font-weight:normal;color:#000;">5.45 лв.</div><div style="position:absolute;left:1316.30px;top:612.45px;white-space:pre;font-family:'Liberation Sans', sans-serif;font-size:16.6px;line-height:16.6px;font-weight:bold;color:#000;transform:scaleX(0.9883);transform-origin:1.10px 0;">МЕХАНИЗАЦИЯ</div><div style="position:absolute;left:1247.10px;top:634.15px;white-space:pre;font-family:'Liberation Sans', sans-serif;font-size:16.6px;line-height:16.6px;font-weight:normal;color:#000;transform:scaleX(1.0054);transform-origin:1.30px 0;">МСМ</div><div style="position:absolute;left:1369.30px;top:634.15px;white-space:pre;font-family:'Liberation Sans', sans-serif;font-size:16.6px;line-height:16.6px;font-weight:normal;color:#000;">1.0000</div><div style="position:absolute;left:1523.30px;top:634.15px;white-space:pre;font-family:'Liberation Sans', sans-serif;font-size:16.6px;line-height:16.6px;font-weight:normal;color:#000;">1.000</div><div style="position:absolute;left:1635.90px;top:634.15px;white-space:pre;font-family:'Liberation Sans', sans-serif;font-size:16.6px;line-height:16.6px;font-weight:normal;color:#000;">0.00 лв.</div><div style="position:absolute;left:1761.50px;top:634.15px;white-space:pre;font-family:'Liberation Sans', sans-serif;font-size:16.6px;line-height:16.6px;font-weight:normal;color:#000;">0.00 лв.</div><div style="position:absolute;left:1761.50px;top:656.95px;white-space:pre;font-family:'Liberation Sans', sans-serif;font-size:16.6px;line-height:16.6px;font-weight:normal;color:#000;">0.00 лв.</div><div style="position:absolute;left:1360.70px;top:677.45px;white-space:pre;font-family:'Liberation Sans', sans-serif;font-size:16.6px;line-height:16.6px;font-weight:bold;color:#000;transform:scaleX(0.9929);transform-origin:0.10px 0;">ТРУД</div><div style="position:absolute;left:938.30px;top:699.75px;white-space:pre;font-family:'Liberation Sans', sans-serif;font-size:16.6px;line-height:16.6px;font-weight:normal;color:#000;transform:scaleX(1.0138);transform-origin:1.30px 0;">Работник - 11-1</div><div style="position:absolute;left:1247.20px;top:699.75px;white-space:pre;font-family:'Liberation Sans', sans-serif;font-size:16.6px;line-height:16.6px;font-weight:normal;color:#000;transform:scaleX(1.0152);transform-origin:1.20px 0;">ЧЧ</div><div style="position:absolute;left:1360.00px;top:699.75px;white-space:pre;font-family:'Liberation Sans', sans-serif;font-size:16.6px;line-height:16.6px;font-weight:normal;color:#000;">0.12900</div><div style="position:absolute;left:1532.50px;top:699.75px;white-space:pre;font-family:'Liberation Sans', sans-serif;font-size:16.6px;line-height:16.6px;font-weight:normal;color:#000;">1.00</div><div style="position:absolute;left:1635.90px;top:699.75px;white-space:pre;font-family:'Liberation Sans', sans-serif;font-size:16.6px;line-height:16.6px;font-weight:normal;color:#000;">6.50 лв.</div><div style="position:absolute;left:1761.50px;top:699.75px;white-space:pre;font-family:'Liberation Sans', sans-serif;font-size:16.6px;line-height:16.6px;font-weight:normal;color:#000;">0.84 лв.</div><div style="position:absolute;left:938.30px;top:720.85px;white-space:pre;font-family:'Liberation Sans', sans-serif;font-size:16.6px;line-height:16.6px;font-weight:normal;color:#000;transform:scaleX(1.0164);transform-origin:1.30px 0;">Работник - 11-2</div><div style="position:absolute;left:1247.20px;top:720.85px;white-space:pre;font-family:'Liberation Sans', sans-serif;font-size:16.6px;line-height:16.6px;font-weight:normal;color:#000;transform:scaleX(1.0152);transform-origin:1.20px 0;">ЧЧ</div><div style="position:absolute;left:1360.00px;top:720.85px;white-space:pre;font-family:'Liberation Sans', sans-serif;font-size:16.6px;line-height:16.6px;font-weight:normal;color:#000;">0.10200</div><div style="position:absolute;left:1532.50px;top:720.85px;white-space:pre;font-family:'Liberation Sans', sans-serif;font-size:16.6px;line-height:16.6px;font-weight:normal;color:#000;">1.00</div><div style="position:absolute;left:1635.90px;top:720.85px;white-space:pre;font-family:'Liberation Sans', sans-serif;font-size:16.6px;line-height:16.6px;font-weight:normal;color:#000;">6.50 лв.</div><div style="position:absolute;left:1761.50px;top:720.85px;white-space:pre;font-family:'Liberation Sans', sans-serif;font-size:16.6px;line-height:16.6px;font-weight:normal;color:#000;">0.66 лв.</div><div style="position:absolute;left:1761.50px;top:742.15px;white-space:pre;font-family:'Liberation Sans', sans-serif;font-size:16.6px;line-height:16.6px;font-weight:normal;color:#000;">1.50 лв.</div><div style="position:absolute;left:1264.90px;top:764.45px;white-space:pre;font-family:'Liberation Sans', sans-serif;font-size:16.6px;line-height:16.6px;font-weight:bold;color:#000;transform:scaleX(1.0164);transform-origin:0.10px 0;">ДОПЪЛНИТЕЛНИ РАЗХОДИ</div><div style="position:absolute;left:938.50px;top:786.45px;white-space:pre;font-family:'Liberation Sans', sans-serif;font-size:16.6px;line-height:16.6px;font-weight:bold;color:#000;transform:scaleX(0.9864);transform-origin:1.10px 0;">МАТЕРИАЛИ</div><div style="position:absolute;left:1363.70px;top:786.45px;white-space:pre;font-family:'Liberation Sans', sans-serif;font-size:16.6px;line-height:16.6px;font-weight:normal;color:#000;">10.00%</div><div style="position:absolute;left:1761.50px;top:786.45px;white-space:pre;font-family:'Liberation Sans', sans-serif;font-size:16.6px;line-height:16.6px;font-weight:normal;color:#000;">0.55 лв.</div><div style="position:absolute;left:938.50px;top:808.65px;white-space:pre;font-family:'Liberation Sans', sans-serif;font-size:16.6px;line-height:16.6px;font-weight:bold;color:#000;transform:scaleX(0.9891);transform-origin:1.10px 0;">МЕХАНИЗАЦИЯ</div><div style="position:absolute;left:1363.70px;top:808.65px;white-space:pre;font-family:'Liberation Sans', sans-serif;font-size:16.6px;line-height:16.6px;font-weight:normal;color:#000;">30.00%</div><div style="position:absolute;left:1761.50px;top:808.65px;white-space:pre;font-family:'Liberation Sans', sans-serif;font-size:16.6px;line-height:16.6px;font-weight:normal;color:#000;">0.00 лв.</div><div style="position:absolute;left:939.50px;top:830.35px;white-space:pre;font-family:'Liberation Sans', sans-serif;font-size:16.6px;line-height:16.6px;font-weight:bold;color:#000;transform:scaleX(1.0190);transform-origin:0.10px 0;">ТРУД</div><div style="position:absolute;left:1354.40px;top:830.35px;white-space:pre;font-family:'Liberation Sans', sans-serif;font-size:16.6px;line-height:16.6px;font-weight:normal;color:#000;">100.00%</div><div style="position:absolute;left:1761.50px;top:830.35px;white-space:pre;font-family:'Liberation Sans', sans-serif;font-size:16.6px;line-height:16.6px;font-weight:normal;color:#000;">1.50 лв.</div><div style="position:absolute;left:938.50px;top:852.55px;white-space:pre;font-family:'Liberation Sans', sans-serif;font-size:16.6px;line-height:16.6px;font-weight:bold;color:#000;transform:scaleX(1.0204);transform-origin:1.10px 0;">ВСИЧКИ ДОПЪЛНИТЕЛНИ РАЗХОДИ</div><div style="position:absolute;left:1761.50px;top:852.55px;white-space:pre;font-family:'Liberation Sans', sans-serif;font-size:16.6px;line-height:16.6px;font-weight:normal;color:#000;">2.05 лв.</div><div style="position:absolute;left:938.50px;top:874.45px;white-space:pre;font-family:'Liberation Sans', sans-serif;font-size:16.6px;line-height:16.6px;font-weight:bold;color:#000;transform:scaleX(0.9963);transform-origin:1.10px 0;">ПЕЧАЛБА</div><div style="position:absolute;left:1363.70px;top:874.45px;white-space:pre;font-family:'Liberation Sans', sans-serif;font-size:16.6px;line-height:16.6px;font-weight:normal;color:#000;">10.00%</div><div style="position:absolute;left:1761.50px;top:874.45px;white-space:pre;font-family:'Liberation Sans', sans-serif;font-size:16.6px;line-height:16.6px;font-weight:normal;color:#000;">0.90 лв.</div><div style="position:absolute;left:1278.40px;top:896.15px;white-space:pre;font-family:'Liberation Sans', sans-serif;font-size:16.6px;line-height:16.6px;font-weight:bold;color:#000;transform:scaleX(1.0398);transform-origin:1.10px 0;">ВСИЧКО:</div><div style="position:absolute;left:1758.80px;top:896.15px;white-space:pre;font-family:'Liberation Sans', sans-serif;font-size:16.6px;line-height:16.6px;font-weight:bold;color:#000;">9.90 лв.</div><div style="position:absolute;left:1319.60px;top:937.25px;white-space:pre;font-family:'Liberation Sans', sans-serif;font-size:16.6px;line-height:16.6px;font-weight:bold;color:#000;transform:scaleX(1.0034);transform-origin:0.40px 0;">АНАЛИЗ  № 11</div></div></div><div style="position:absolute;left:1861px;top:247px;width:26px;height:713px;background:#e6e6e6"></div><div style="position:absolute;left:1865px;top:267px;width:19px;height:675px;background:#dadada"></div><div style="position:absolute;left:1865px;top:250px;width:19px;height:17px;background:#fff;border:1px solid #d0d0d0;box-sizing:border-box"></div><svg style="position:absolute;left:1869px;top:255px;" width="11" height="6" viewBox="0 0 11 6"><path d="M0 6L5.5 0.5L11 6Z" fill="#777"/></svg><div style="position:absolute;left:1865px;top:291px;width:19px;height:21px;background:#fff;border:1px solid #cfcfcf;box-sizing:border-box"></div><div style="position:absolute;left:1865px;top:942px;width:19px;height:17px;background:#fff;border:1px solid #d0d0d0;box-sizing:border-box"></div><svg style="position:absolute;left:1869px;top:948px;" width="11" height="6" viewBox="0 0 11 6"><path d="M0 0L5.5 5.5L11 0Z" fill="#777"/></svg><div style="position:absolute;left:883px;top:960px;width:1004px;height:30px;background:#e6e6e6"></div><div style="position:absolute;left:883px;top:960px;width:104px;height:1px;background:#c6c6c6"></div><div style="position:absolute;left:1036px;top:960px;width:851px;height:1px;background:#c6c6c6"></div><svg style="position:absolute;left:911px;top:969px;" width="6" height="10" viewBox="0 0 6 10"><path d="M6 0V10L0 5Z" fill="#c4c4c4"/></svg><svg style="position:absolute;left:939px;top:969px;" width="6" height="10" viewBox="0 0 6 10"><path d="M0 0V10L6 5Z" fill="#c4c4c4"/></svg><div style="position:absolute;left:986px;top:960px;width:50px;height:26px;background:#fff;border-left:1px solid #c6c6c6;border-right:1px solid #c6c6c6;box-sizing:border-box"></div><div style="position:absolute;left:987px;top:984px;width:48px;height:2px;background:#217346"></div><div style="position:absolute;left:998.00px;top:963.23px;white-space:pre;font-family:'Liberation Sans', sans-serif;font-size:16.5px;line-height:16.5px;font-weight:bold;color:#217346;transform:scaleX(1.0638);transform-origin:0.40px 0;">АЦ</div><svg style="position:absolute;left:1069px;top:965px;" width="21" height="21" viewBox="0 0 21 21"><circle cx="10.5" cy="10.5" r="9.5" stroke="#666" stroke-width="1.3" fill="none"/><path d="M10.5 5V16M5 10.5H16" stroke="#666" stroke-width="1.5"/></svg><svg style="position:absolute;left:1483px;top:966px;" width="4" height="17" viewBox="0 0 4 17"><circle cx="2" cy="2" r="1.5" fill="#aaa"/><circle cx="2" cy="8.5" r="1.5" fill="#aaa"/><circle cx="2" cy="15" r="1.5" fill="#aaa"/></svg><div style="position:absolute;left:1501px;top:965px;width:360px;height:19px;background:#dadada"></div><div style="position:absolute;left:1501px;top:965px;width:19px;height:19px;background:#fff;border:1px solid #cfcfcf;box-sizing:border-box"></div><svg style="position:absolute;left:1507px;top:970px;" width="6" height="9" viewBox="0 0 6 9"><path d="M6 0V9L0 4.5Z" fill="#666"/></svg><div style="position:absolute;left:1520px;top:965px;width:264px;height:19px;background:#fff;border:1px solid #cfcfcf;box-sizing:border-box"></div><div style="position:absolute;left:1843px;top:965px;width:19px;height:19px;background:#fff;border:1px solid #cfcfcf;box-sizing:border-box"></div><svg style="position:absolute;left:1850px;top:970px;" width="6" height="9" viewBox="0 0 6 9"><path d="M0 0V9L6 4.5Z" fill="#666"/></svg><div style="position:absolute;left:883px;top:990px;width:1004px;height:26px;background:#f1f1f1"></div><div style="position:absolute;left:883px;top:990px;width:1004px;height:1px;background:#d6d6d6"></div><div style="position:absolute;left:889.20px;top:995.15px;white-space:pre;font-family:'Liberation Sans', sans-serif;font-size:14px;line-height:14px;font-weight:normal;color:#444;transform:scaleX(0.8934);transform-origin:1.10px 0;">Ready</div><svg style="position:absolute;left:1556px;top:995px;" width="14" height="14" viewBox="0 0 14 14"><path d="M0.5 0.5H13.5V13.5H0.5ZM0.5 4.8H13.5M0.5 9.2H13.5M4.8 0.5V13.5M9.2 0.5V13.5" stroke="#666" stroke-width="1" fill="none"/></svg><svg style="position:absolute;left:1597px;top:995px;" width="15" height="14" viewBox="0 0 15 14"><rect x="0.5" y="0.5" width="14" height="13" stroke="#666" stroke-width="1" fill="none"/><rect x="3.5" y="3" width="8" height="8" stroke="#666" stroke-width="1" fill="none"/><path d="M5 5.5H10M5 8H10" stroke="#666" stroke-width="1"/></svg><div style="position:absolute;left:1625px;top:991px;width:41px;height:25px;background:#c8c8c8"></div><svg style="position:absolute;left:1638px;top:995px;" width="15" height="14" viewBox="0 0 15 14"><path d="M0.5 0.5H14.5V13.5H0.5ZM7.5 0.5V7.5H0.5M4 0.5V7.5" stroke="#666" stroke-width="1.1" fill="none"/></svg><div style="position:absolute;left:1671px;top:1001px;width:9px;height:2px;background:#555"></div><div style="position:absolute;left:1684px;top:1002px;width:125px;height:1px;background:#aaa"></div><div style="position:absolute;left:1747px;top:998px;width:1px;height:8px;background:#aaa"></div><div style="position:absolute;left:1734px;top:995px;width:5px;height:14px;background:#666"></div><svg style="position:absolute;left:1813px;top:996px;" width="12" height="12" viewBox="0 0 12 12"><path d="M6 0V12M0 6H12" stroke="#555" stroke-width="1.8"/></svg><div style="position:absolute;left:1840.40px;top:995.15px;white-space:pre;font-family:'Liberation Sans', sans-serif;font-size:14px;line-height:14px;font-weight:normal;color:#555;transform:scaleX(0.9111);transform-origin:0.60px 0;">85%</div></div></div><div style="position:absolute;left:882px;top:9px;width:1006px;height:1px;background:#8a8a8a"></div><div style="position:absolute;left:882px;top:9px;width:1px;height:1008px;background:#8a8a8a"></div><div style="position:absolute;left:1887px;top:9px;width:1px;height:1008px;background:#8a8a8a"></div><div style="position:absolute;left:882px;top:1016px;width:1006px;height:1px;background:#8a8a8a"></div></div></body></html>
